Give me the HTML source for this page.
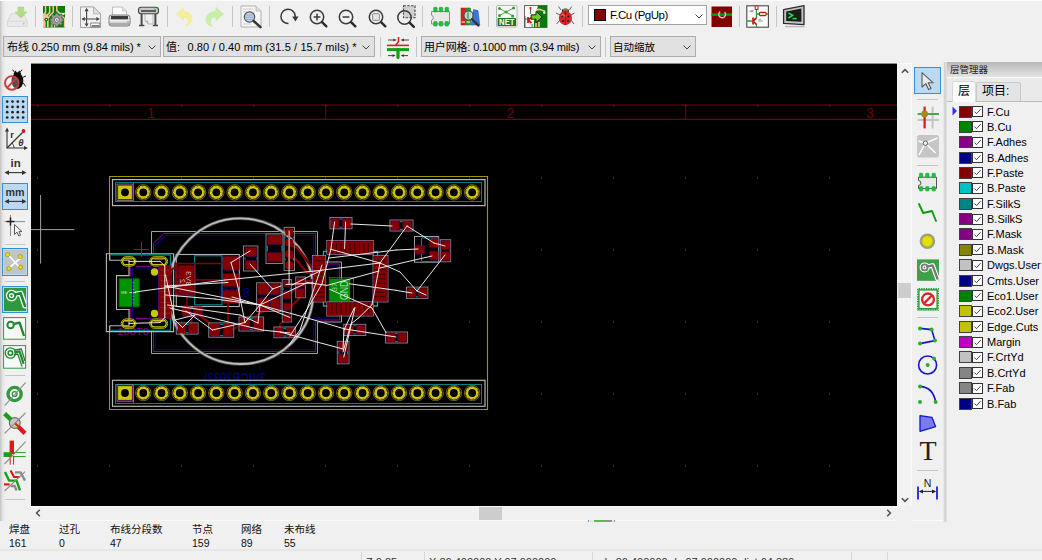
<!DOCTYPE html>
<html lang="zh"><head><meta charset="utf-8"><title>Pcbnew</title>
<style>
*{box-sizing:border-box;margin:0;padding:0}
html,body{width:1042px;height:560px;overflow:hidden;background:#f0f0f0;font-family:"Liberation Sans","Noto Sans CJK SC",sans-serif;font-size:12px;color:#000}
.abs{position:absolute}
#canvas{position:absolute;left:31px;top:64px;width:866px;height:442px;background:#000;overflow:hidden}
.combo{position:absolute;height:21px;border:1px solid #adadad;background:#e1e1e1;font-size:11px;line-height:20px;padding-left:3px;white-space:nowrap;overflow:hidden}
.combo .chev{position:absolute;right:4px;top:8px}
.sep{position:absolute;width:1px;background:#c5c5c5}
.hsep{position:absolute;height:1px;background:#c5c5c5}
.lr{position:absolute;left:953px;height:13px;width:90px;white-space:nowrap}
.lr .sw{position:absolute;left:6px;top:0;width:13px;height:12px;border:1px solid #404040}
.lr .cb{position:absolute;left:19px;top:0.5px;width:11px;height:11px;border:1px solid #333;background:#fff}
.lr .cb svg{position:absolute;left:0;top:0;width:9px;height:9px}
.lr .ln{position:absolute;left:34px;top:-1px;font-size:11px;line-height:14px;color:#000}
.ico{position:absolute}
.msg{position:absolute;font-size:10.5px;line-height:13px;color:#111;white-space:nowrap}
</style></head>
<body>
<div class="abs" style="left:0;top:0;width:8px;height:521px;background:linear-gradient(90deg,#c2c2c2 0,#e4e4e4 2.5px,#f0f0f0 6px)"></div>
<div class="abs" style="left:0;top:0;width:1042px;height:1px;background:#fcfcfc"></div>
<div class="sep" style="left:35px;top:6px;height:21px"></div>
<div class="sep" style="left:72px;top:6px;height:21px"></div>
<div class="sep" style="left:167px;top:6px;height:21px"></div>
<div class="sep" style="left:232px;top:6px;height:21px"></div>
<div class="sep" style="left:269px;top:6px;height:21px"></div>
<div class="sep" style="left:422px;top:6px;height:21px"></div>
<div class="sep" style="left:488px;top:6px;height:21px"></div>
<div class="sep" style="left:582px;top:6px;height:21px"></div>
<div class="sep" style="left:739px;top:6px;height:21px"></div>
<div class="sep" style="left:776px;top:6px;height:21px"></div>
<svg class="ico" style="left:6px;top:4px" width="24" height="24" viewBox="0 0 24 24"><path d="M5.25 9.75 H17.75 L21.25 17.25 V22.5 H1.5 V17.25 Z" fill="#e9e9e9" stroke="#d2d2d2" stroke-width="0.8"/><path d="M1.5 17.25 H21.25" stroke="#d6d6d6" stroke-width="0.8"/><path d="M12 3 H17.75 V8 H21 L15 14.2 L9 8 H12 Z" fill="#b4dc88" stroke="#a8d47c" stroke-width="0.6"/><circle cx="17.75" cy="19.7" r="0.9" fill="#7ee060"/></svg>
<svg class="ico" style="left:43px;top:6px" width="22" height="22" viewBox="0 0 22 22"><rect x="0" y="0" width="22" height="21.5" fill="#0a7a0a"/><path d="M0 9.6 L2.4 7.2 L7.2 12 V21.5 H0 Z" fill="#f0c890"/><path d="M2.55 0 V6.4 L0 9 M6.7 0 V6.6 L2.8 10.4 M10.2 0 V6.2 L6 10.4 M13.8 0 V4.6 L16.6 7.4 H22" stroke="#f0c890" stroke-width="1.5" fill="none"/><path d="M3.3 13 V21.5 M6.4 12 V21.5" stroke="#0a7a0a" stroke-width="1.4" fill="none"/><path d="M8.8 14 V21.5 M11.6 18 V21.5 M18.5 9.5 L21.5 12.5 V21.5" stroke="#f0c890" stroke-width="1.3" fill="none"/><circle cx="3.3" cy="13.6" r="1.9" fill="#0a7a0a"/><circle cx="3.3" cy="13.6" r="0.7" fill="#fff"/><circle cx="20.2" cy="8" r="1.1" fill="#fff"/><g transform="translate(13.8,13.9)"><path d="M-1.1 -6.3 H1.1 L1.5 -4.6 L3 -4 L4.5 -5 L6 -3.4 L5 -2 L5.6 -0.6 L7.2 -0.2 V1.9 L5.6 2.3 L5 3.7 L6 5.1 L4.5 6.7 L3 5.7 L1.5 6.3 L1.1 8 H-1.1 L-1.5 6.3 L-3 5.7 L-4.5 6.7 L-6 5.1 L-5 3.7 L-5.6 2.3 L-7.2 1.9 V-0.2 L-5.6 -0.6 L-5 -2 L-6 -3.4 L-4.5 -5 L-3 -4 L-1.5 -4.6 Z" transform="translate(0,-0.8) scale(0.92)" fill="#9a9a9a" stroke="#5a5a5a" stroke-width="0.8"/><circle cx="0" cy="0" r="2.5" fill="#d8e8d8" stroke="#5a5a5a" stroke-width="0.8"/><circle cx="0" cy="0" r="1" fill="#58a858"/></g></svg>
<svg class="ico" style="left:80px;top:5px" width="22" height="24" viewBox="0 0 22 24"><path d="M0.5 1.9 H13.5 L20.5 8.9 V22.5 H0.5 Z" fill="#f2f2f2" stroke="#9c9c9c" stroke-width="0.9"/><path d="M13.5 1.9 V8.9 H20.5 Z" fill="#dedede" stroke="#a8a8a8" stroke-width="0.7"/><path d="M6.6 4.2 V20.4 M2.6 14 H18.6" stroke="#444" stroke-width="1.1"/><path d="M6.6 2.8 L4.6 6.2 H8.6 Z M6.6 21.8 L4.6 18.4 H8.6 Z M1.4 14 L4.8 12 V16 Z M19.8 14 L16.4 12 V16 Z" fill="#444"/><rect x="10.8" y="18" width="9" height="3.8" fill="#fff" stroke="#7a6a6a" stroke-width="0.8"/><path d="M12 20.8 H19" stroke="#333" stroke-width="0.9"/></svg>
<svg class="ico" style="left:108px;top:5px" width="23" height="23" viewBox="0 0 23 23"><path d="M4.5 2 H14.5 L18.5 6 V12 H4.5 Z" fill="#fbfbfb" stroke="#b0b0b0" stroke-width="0.8"/><path d="M14.5 2 V6 H18.5" fill="#e2e2e2" stroke="#b4b4b4" stroke-width="0.6"/><rect x="1" y="10" width="21" height="11" rx="2.5" fill="#d8d8d8" stroke="#707070" stroke-width="0.9"/><rect x="3" y="11" width="17" height="3.4" fill="#3c3c3c"/><path d="M1.5 15.5 H21.5" stroke="#f4f4f4" stroke-width="1.4"/><path d="M2 19 H21" stroke="#a0a0a0" stroke-width="1.6"/><circle cx="20" cy="16.8" r="0.8" fill="#40d040"/></svg>
<svg class="ico" style="left:137px;top:6px" width="23" height="21" viewBox="0 0 23 21"><path d="M8 5 H16 V18 H11 L8 15 Z" fill="#f0f0f0" stroke="#a0a0a0" stroke-width="0.7"/><path d="M8 15 H11 V18" fill="#ccc" stroke="#a0a0a0" stroke-width="0.6"/><rect x="1.5" y="1.2" width="20" height="6.6" rx="2.6" fill="#c8c8c8" stroke="#4a4a4a" stroke-width="1.1"/><path d="M4 5 H19" stroke="#222" stroke-width="1.3"/><circle cx="18.3" cy="3.2" r="0.9" fill="#30e030"/><path d="M4.6 8 V19 M18.4 8 V19" stroke="#4a4a4a" stroke-width="2"/><path d="M2 19.6 H7.4 M15.8 19.6 H21" stroke="#4a4a4a" stroke-width="1.5"/></svg>
<svg class="ico" style="left:175px;top:6px" width="19" height="21" viewBox="0 0 19 21"><path d="M1.5 8 L8.5 1.5 V5.5 C14 5.5 17 9 17 12.5 C17 16 14 19 11 19.5 C13 17.5 13.3 15.5 12.6 13.6 C11.8 11.6 10.5 10.8 8.5 10.8 V14.5 Z" fill="#f6ee9c" stroke="#f2e98e" stroke-width="0.6"/></svg>
<svg class="ico" style="left:204px;top:6px" width="21" height="22" viewBox="0 0 21 22"><path d="M19.5 8 L12 1.5 V5.5 C6 5.5 2 9.5 2 13.5 C2 17 4.5 19.5 8 20 C6.3 18 6 16 6.8 14 C7.7 11.8 9.5 11 12 11 V14.5 Z" fill="#c8efa6" stroke="#bfe89a" stroke-width="0.6"/></svg>
<svg class="ico" style="left:239px;top:4px" width="24" height="25" viewBox="0 0 24 25"><path d="M2 2 H17 L22 7 V23 H2 Z" fill="#f6f6f6" stroke="#a8a8a8" stroke-width="0.9"/><path d="M17 2 V7 H22" fill="#e0e0e0" stroke="#b0b0b0" stroke-width="0.7"/><path d="M4 5 H14 M4 8 H16 M4 20 H12" stroke="#c8c8c8" stroke-width="0.9"/><circle cx="10.5" cy="13" r="5.2" fill="#c6d4ee" stroke="#555" stroke-width="1.2"/><path d="M6.6 11 H14.4 M6 13.2 H15 M6.6 15.4 H14.4" stroke="#8ea2cc" stroke-width="0.9"/><path d="M14.6 17 L21.5 23.2" stroke="#333" stroke-width="2.4" stroke-linecap="round"/></svg>
<svg class="ico" style="left:279px;top:7px" width="20" height="19" viewBox="0 0 20 19"><path d="M16.3 10 A7.2 7.2 0 1 0 9.5 16.6" fill="none" stroke="#3a3a3a" stroke-width="1.5"/><path d="M13.2 9.6 H19.6 L16.4 14.6 Z" fill="#3a3a3a"/></svg>
<svg class="ico" style="left:306px;top:6px" width="24" height="24" viewBox="0 0 24 24"><circle cx="11" cy="11" r="6.7" fill="none" stroke="#3a3a3a" stroke-width="1.5"/><path d="M16.04 16.04 L20.34 20.34" stroke="#2a2a2a" stroke-width="2.4" stroke-linecap="round"/><path d="M7.6 11 H14.4 M11 7.6 V14.4" stroke="#3a3a3a" stroke-width="1.5"/></svg>
<svg class="ico" style="left:335px;top:6px" width="24" height="24" viewBox="0 0 24 24"><circle cx="11" cy="11" r="6.7" fill="none" stroke="#3a3a3a" stroke-width="1.5"/><path d="M16.04 16.04 L20.34 20.34" stroke="#2a2a2a" stroke-width="2.4" stroke-linecap="round"/><path d="M7.6 11 H14.4" stroke="#3a3a3a" stroke-width="1.5"/></svg>
<svg class="ico" style="left:365px;top:6px" width="24" height="24" viewBox="0 0 24 24"><circle cx="11" cy="11" r="6.7" fill="none" stroke="#3a3a3a" stroke-width="1.5"/><path d="M16.04 16.04 L20.34 20.34" stroke="#2a2a2a" stroke-width="2.4" stroke-linecap="round"/><rect x="7.6" y="7.6" width="6.8" height="6.8" rx="1" fill="#e4e4e4" stroke="#8a8a8a" stroke-width="1"/></svg>
<svg class="ico" style="left:395px;top:4px" width="24" height="26" viewBox="0 0 24 26"><rect x="8.5" y="1.8" width="11.5" height="12" fill="#d0d0d0" stroke="#444" stroke-width="1.1" stroke-dasharray="2.4 1.4"/><circle cx="9.5" cy="13.5" r="6.7" fill="none" stroke="#3a3a3a" stroke-width="1.5"/><path d="M14.54 18.54 L18.84 22.84" stroke="#2a2a2a" stroke-width="2.4" stroke-linecap="round"/></svg>
<svg class="ico" style="left:429px;top:6px" width="24" height="22" viewBox="0 0 24 22"><path d="M2.5 5.5 H20.5 V18 H2.5 V14.2 A2.6 2.6 0 0 0 2.5 9.2 Z" fill="#e8e8e8" stroke="#8c8c8c" stroke-width="1"/><rect x="4.6" y="1.3" width="3.6" height="4.6" rx="0.8" fill="#20c040" stroke="#0a9a28" stroke-width="0.5"/><rect x="4.6" y="15.5" width="3.6" height="4.6" rx="0.8" fill="#20c040" stroke="#0a9a28" stroke-width="0.5"/><rect x="10.2" y="1.3" width="3.6" height="4.6" rx="0.8" fill="#20c040" stroke="#0a9a28" stroke-width="0.5"/><rect x="10.2" y="15.5" width="3.6" height="4.6" rx="0.8" fill="#20c040" stroke="#0a9a28" stroke-width="0.5"/><rect x="16" y="1.3" width="3.6" height="4.6" rx="0.8" fill="#20c040" stroke="#0a9a28" stroke-width="0.5"/><rect x="16" y="15.5" width="3.6" height="4.6" rx="0.8" fill="#20c040" stroke="#0a9a28" stroke-width="0.5"/></svg>
<svg class="ico" style="left:459px;top:6px" width="24" height="22" viewBox="0 0 24 22"><rect x="2" y="2" width="4.6" height="17" fill="#e02020" stroke="#a01010" stroke-width="0.5"/><rect x="7" y="2" width="4.6" height="17" fill="#20a030" stroke="#107018" stroke-width="0.5"/><path d="M12 19 L14.5 3.5 L19 4.5 L20.8 19 Z" fill="#3878d8" stroke="#2050a0" stroke-width="0.5"/><path d="M2.5 16 H6 M7.5 16 H11" stroke="#fff" stroke-width="1"/><circle cx="9.5" cy="9.5" r="4.6" fill="#d4e4e0" fill-opacity="0.85" stroke="#4a4a4a" stroke-width="1.2"/><path d="M9 6.5 V12.5" stroke="#40b050" stroke-width="1.6"/><path d="M13 13.2 L19.5 19.6" stroke="#333" stroke-width="2.2" stroke-linecap="round"/></svg>
<svg class="ico" style="left:496px;top:5px" width="22" height="23" viewBox="0 0 22 23"><rect x="0.5" y="0.5" width="20.5" height="21.5" rx="1.2" fill="#f6f6f6" stroke="#b4b4b4" stroke-width="1"/><path d="M3.5 3.5 L17 11 M17.5 3 L3.5 10.5" stroke="#3c9a3c" stroke-width="0.9" fill="none"/><circle cx="3.5" cy="3.5" r="1.5" fill="#3c9a3c"/><circle cx="17.6" cy="3" r="1.5" fill="#3c9a3c"/><circle cx="3.5" cy="10.5" r="1.5" fill="#3c9a3c"/><circle cx="16.6" cy="11" r="1.5" fill="#3c9a3c"/><circle cx="10.2" cy="7" r="1.5" fill="#3c9a3c"/><rect x="1.6" y="13" width="18.4" height="8" fill="#1e7a1e"/><text x="10.8" y="20.2" font-size="8.2" font-weight="bold" fill="#fff" text-anchor="middle" font-family="Liberation Sans, sans-serif" textLength="15.5" lengthAdjust="spacingAndGlyphs">NET</text></svg>
<svg class="ico" style="left:524px;top:5px" width="24" height="24" viewBox="0 0 24 24"><rect x="0.5" y="0.5" width="22.5" height="22" fill="#fafafa" stroke="#6a6a6a" stroke-width="1"/><path d="M14 0.5 H23 V22.5 H10 V16 Z" fill="#0a7a0a"/><path d="M13 5 C16 3 18 6 21 6 M12 22 V18 M15 22 V17" stroke="#e8c890" stroke-width="1.6" fill="none"/><circle cx="20.3" cy="7.5" r="1.2" fill="#fff"/><path d="M6.5 2 V8 M1 14 H5 M1 22 V11" stroke="#444" stroke-width="0.8"/><path d="M6.5 2 V4.5" stroke="#d02020" stroke-width="1.8"/><path d="M6.5 6 V9" stroke="#30a030" stroke-width="1.2"/><path d="M4 12 V18 M4 15 L7.5 12.5 M4 15 L7.5 18" stroke="#c01818" stroke-width="1.7" fill="none"/><path d="M8 22 V19" stroke="#30a030" stroke-width="1.2"/><path d="M7.2 9.8 H12 V6.4 L18.2 12 L12 17.6 V14.2 H7.2 Z" fill="#6ad020" stroke="#222" stroke-width="1"/></svg>
<svg class="ico" style="left:555px;top:5px" width="22" height="23" viewBox="0 0 22 23"><path d="M6 5 L3.5 1.5 M14.5 5 L16.5 1.5 M5 10 L1 8 M16 10 L19.5 8 M5 15 L1.5 19 M16 15 L19 19" stroke="#555" stroke-width="0.9" fill="none"/><ellipse cx="10.4" cy="6" rx="3.6" ry="2.6" fill="#222"/><path d="M8 5 H13" stroke="#e8c030" stroke-width="1"/><ellipse cx="10.4" cy="13" rx="6.6" ry="7.2" fill="#d82828"/><ellipse cx="8.6" cy="10.5" rx="2.6" ry="2" fill="#f07070" opacity="0.7"/><path d="M10.4 6 V20" stroke="#801010" stroke-width="0.7"/><circle cx="7.4" cy="11.5" r="1.1" fill="#222"/><circle cx="13.4" cy="11.5" r="1.1" fill="#222"/><circle cx="8" cy="16" r="1.1" fill="#222"/><circle cx="13" cy="16" r="1.1" fill="#222"/><circle cx="10.4" cy="8.6" r="1" fill="#222"/></svg>
<svg class="ico" style="left:711px;top:6px" width="21" height="21" viewBox="0 0 21 21"><rect x="0.5" y="0.5" width="20.5" height="20.5" fill="#840000"/><path d="M0.5 8.6 H21" stroke="#0a9a0a" stroke-width="2.6"/><path d="M13.6 6 A3.4 3.4 0 1 1 9.2 5.6" fill="none" stroke="#c8c8c8" stroke-width="1.4"/></svg>
<svg class="ico" style="left:746px;top:5px" width="24" height="23" viewBox="0 0 24 23"><rect x="0.8" y="0.8" width="21.6" height="21.4" fill="#fafafa" stroke="#4a4a4a" stroke-width="1.1"/><path d="M10.5 1 V4 M10.5 4 V13 M10.5 9 H13 M20 9 H22 M1 16 H6 M10.5 19 V22" stroke="#30a030" stroke-width="1.3" fill="none"/><rect x="9.2" y="0.8" width="2.8" height="3.6" fill="#fff" stroke="#c01818" stroke-width="1"/><rect x="13.4" y="7.4" width="6.8" height="3.2" rx="1" fill="#f8e8b0" stroke="#c01818" stroke-width="1.1"/><path d="M7 12.5 V19.5 M7 16 L10.5 13 M7 16 L10.5 19.5" stroke="#c01818" stroke-width="1.7" fill="none"/><path d="M3.5 6.6 H7.5 M4.5 5.4 H7.5 M12.5 14.6 H15 M12 16 H17" stroke="#777" stroke-width="0.7"/></svg>
<svg class="ico" style="left:782px;top:4px" width="25" height="25" viewBox="0 0 25 25"><path d="M3 22.6 H22.5" stroke="#b8b8b8" stroke-width="1.4"/><path d="M1.6 5.6 L22 1.6 V20.6 L1.6 19.4 Z" fill="#c4c4c4" stroke="#2c2c2c" stroke-width="1.3" stroke-linejoin="round"/><path d="M4.2 7.4 L19.4 4.6 V17.8 L4.2 17 Z" fill="#1c1c1c"/><path d="M6.4 9 L10.6 11.4 L6.4 14" fill="none" stroke="#20e040" stroke-width="1.6"/><path d="M10.6 14.6 H14.6" stroke="#20e040" stroke-width="1.5"/></svg>
<svg class="ico" style="left:386px;top:36px" width="24" height="24" viewBox="0 0 24 24"><path d="M1 9.4 H23" stroke="#e02020" stroke-width="1.6"/><path d="M12.5 1 V5.6 L9.6 9.4" stroke="#e02020" stroke-width="1.6" fill="none"/><path d="M1 13.6 H23" stroke="#12a012" stroke-width="3"/><path d="M12 13.6 V21.5" stroke="#12a012" stroke-width="3.2" stroke-linecap="round"/><path d="M2 4 H8 M17 4 H23 M2 19.6 H8 M16 19.6 H22" stroke="#333" stroke-width="0.9"/><path d="M10.6 4 L7.4 2.6 V5.4 Z M14.6 4 L17.8 2.6 V5.4 Z M9.6 19.6 L6.6 18.2 V21 Z M14.8 19.6 L17.8 18.2 V21 Z" fill="#333"/></svg>
<div class="combo" style="left:588px;top:5px;width:119px;height:20px;background:#fff;border-color:#a2a2a2;line-height:19px;padding-left:21px;font-size:11.5px;letter-spacing:-0.5px"><span class="abs" style="left:5px;top:3px;width:12px;height:12px;background:#840000;border:1px solid #000"></span>F.Cu (PgUp)<svg class="chev" style="right:3px" width="8" height="5" viewBox="0 0 8 5"><path d="M0.5 0.5 L4 4 L7.5 0.5" fill="none" stroke="#444" stroke-width="1"/></svg></div>
<div class="combo" style="left:3px;top:36px;width:158px;letter-spacing:-0.08px">布线 0.250 mm (9.84 mils) *<svg class="chev" width="8" height="5" viewBox="0 0 8 5"><path d="M0.5 0.5 L4 4 L7.5 0.5" fill="none" stroke="#444" stroke-width="1"/></svg></div>
<div class="combo" style="left:163px;top:36px;width:212px;padding-left:2px;letter-spacing:0.1px">值:<span style="margin-left:4px"></span> 0.80 / 0.40 mm (31.5 / 15.7 mils) *<svg class="chev" width="8" height="5" viewBox="0 0 8 5"><path d="M0.5 0.5 L4 4 L7.5 0.5" fill="none" stroke="#444" stroke-width="1"/></svg></div>
<div class="sep" style="left:380px;top:37px;height:20px"></div>
<div class="sep" style="left:416px;top:37px;height:20px"></div>
<div class="combo" style="left:421px;top:36px;width:180px;padding-left:2px;letter-spacing:-0.16px">用户网格: 0.1000 mm (3.94 mils)<svg class="chev" width="8" height="5" viewBox="0 0 8 5"><path d="M0.5 0.5 L4 4 L7.5 0.5" fill="none" stroke="#444" stroke-width="1"/></svg></div>
<div class="sep" style="left:605px;top:37px;height:20px"></div>
<div class="combo" style="left:610px;top:36px;width:86px;padding-left:2px;font-size:10.5px">自动缩放<svg class="chev" width="8" height="5" viewBox="0 0 8 5"><path d="M0.5 0.5 L4 4 L7.5 0.5" fill="none" stroke="#444" stroke-width="1"/></svg></div>
<div id="canvas"><svg width="866" height="443" viewBox="31 64 866 443" style="position:absolute;left:0;top:0" font-family="Liberation Sans, sans-serif">
<g stroke="#7c0000" stroke-width="1.1" fill="none">
<path d="M31 105 H897 M31 119.4 H897 M325.8 105 V119.4 M685.8 105 V119.4"/>
</g>
<text x="150.9" y="117.9" font-size="15" fill="#6c0000" text-anchor="middle">1</text>
<text x="510.3" y="117.9" font-size="15" fill="#6c0000" text-anchor="middle">2</text>
<text x="870" y="117.9" font-size="15" fill="#6c0000" text-anchor="middle">3</text>
<g fill="#505050">
<rect x="37" y="105.3" width="1" height="1"/>
<rect x="37" y="177.3" width="1" height="1"/>
<rect x="37" y="249.3" width="1" height="1"/>
<rect x="37" y="321.3" width="1" height="1"/>
<rect x="37" y="393.3" width="1" height="1"/>
<rect x="37" y="465.3" width="1" height="1"/>
<rect x="109" y="105.3" width="1" height="1"/>
<rect x="109" y="177.3" width="1" height="1"/>
<rect x="109" y="249.3" width="1" height="1"/>
<rect x="109" y="321.3" width="1" height="1"/>
<rect x="109" y="393.3" width="1" height="1"/>
<rect x="109" y="465.3" width="1" height="1"/>
<rect x="181" y="105.3" width="1" height="1"/>
<rect x="181" y="177.3" width="1" height="1"/>
<rect x="181" y="249.3" width="1" height="1"/>
<rect x="181" y="321.3" width="1" height="1"/>
<rect x="181" y="393.3" width="1" height="1"/>
<rect x="181" y="465.3" width="1" height="1"/>
<rect x="253" y="105.3" width="1" height="1"/>
<rect x="253" y="177.3" width="1" height="1"/>
<rect x="253" y="249.3" width="1" height="1"/>
<rect x="253" y="321.3" width="1" height="1"/>
<rect x="253" y="393.3" width="1" height="1"/>
<rect x="253" y="465.3" width="1" height="1"/>
<rect x="325" y="105.3" width="1" height="1"/>
<rect x="325" y="177.3" width="1" height="1"/>
<rect x="325" y="249.3" width="1" height="1"/>
<rect x="325" y="321.3" width="1" height="1"/>
<rect x="325" y="393.3" width="1" height="1"/>
<rect x="325" y="465.3" width="1" height="1"/>
<rect x="397" y="105.3" width="1" height="1"/>
<rect x="397" y="177.3" width="1" height="1"/>
<rect x="397" y="249.3" width="1" height="1"/>
<rect x="397" y="321.3" width="1" height="1"/>
<rect x="397" y="393.3" width="1" height="1"/>
<rect x="397" y="465.3" width="1" height="1"/>
<rect x="469" y="105.3" width="1" height="1"/>
<rect x="469" y="177.3" width="1" height="1"/>
<rect x="469" y="249.3" width="1" height="1"/>
<rect x="469" y="321.3" width="1" height="1"/>
<rect x="469" y="393.3" width="1" height="1"/>
<rect x="469" y="465.3" width="1" height="1"/>
<rect x="541" y="105.3" width="1" height="1"/>
<rect x="541" y="177.3" width="1" height="1"/>
<rect x="541" y="249.3" width="1" height="1"/>
<rect x="541" y="321.3" width="1" height="1"/>
<rect x="541" y="393.3" width="1" height="1"/>
<rect x="541" y="465.3" width="1" height="1"/>
<rect x="613" y="105.3" width="1" height="1"/>
<rect x="613" y="177.3" width="1" height="1"/>
<rect x="613" y="249.3" width="1" height="1"/>
<rect x="613" y="321.3" width="1" height="1"/>
<rect x="613" y="393.3" width="1" height="1"/>
<rect x="613" y="465.3" width="1" height="1"/>
<rect x="685" y="105.3" width="1" height="1"/>
<rect x="685" y="177.3" width="1" height="1"/>
<rect x="685" y="249.3" width="1" height="1"/>
<rect x="685" y="321.3" width="1" height="1"/>
<rect x="685" y="393.3" width="1" height="1"/>
<rect x="685" y="465.3" width="1" height="1"/>
<rect x="757" y="105.3" width="1" height="1"/>
<rect x="757" y="177.3" width="1" height="1"/>
<rect x="757" y="249.3" width="1" height="1"/>
<rect x="757" y="321.3" width="1" height="1"/>
<rect x="757" y="393.3" width="1" height="1"/>
<rect x="757" y="465.3" width="1" height="1"/>
<rect x="829" y="105.3" width="1" height="1"/>
<rect x="829" y="177.3" width="1" height="1"/>
<rect x="829" y="249.3" width="1" height="1"/>
<rect x="829" y="321.3" width="1" height="1"/>
<rect x="829" y="393.3" width="1" height="1"/>
<rect x="829" y="465.3" width="1" height="1"/>
</g>
<path d="M40.6 195 V263.6 M31 229.6 H74.4" stroke="#a0a0a0" stroke-width="1" fill="none"/>
<g fill="none" stroke-width="1">
<path d="M151.5 231.5 H317.5 V262 H341.5 V322 H317.5 V353.5 H151.5 V331 M151.5 254 V231.5" stroke="#a0a0a0"/>
<path d="M153.5 254 V243 L164 233.5 H315.5 V264 H339.5 V320 H315.5 V351.5 H153.5 V331" stroke="#8c008c"/>
<path d="M155.5 254 V245 L166 235.5 H313.5 V266 H337.5 V318 H313.5 V349.5 H155.5 V331" stroke="#00008c" stroke-width="1.2"/>
</g>
<path d="M132.6 269 H158 M132.6 319 H158" fill="none" stroke="#00008c" stroke-width="1.2"/>
<path d="M130.3 266 V276.5 M130.3 308.6 V320 M136 266.4 H151 M136 318.6 H151" fill="none" stroke="#8c008c" stroke-width="1"/>
<circle cx="240.5" cy="291.2" r="72.8" fill="none" stroke="#4c4c4c" stroke-width="3.4"/>
<circle cx="240.5" cy="291.2" r="72.8" fill="none" stroke="#bcbcbc" stroke-width="1.8"/>
<g transform="translate(266,382) scale(-1,1)"><text x="0" y="0" font-size="12" fill="#000090" textLength="62" lengthAdjust="spacingAndGlyphs">3V(CR2032)</text></g>
<g transform="translate(149,334.8) scale(-1,1)"><text x="0" y="0" font-size="10.5" fill="#8c008c" textLength="32" lengthAdjust="spacingAndGlyphs" font-family="Liberation Mono, monospace">OTG01</text></g>
<text x="218.7" y="296.8" font-size="12.4" fill="#00007c" textLength="31.7" lengthAdjust="spacingAndGlyphs">C118</text>
<path d="M109.5 260 V176.5 H487.5 V409.5 H109.5 V326" fill="none" stroke="#9a9a00" stroke-width="1.1"/>
<rect x="112.5" y="179.6" width="372.5" height="26" fill="none" stroke="#b4b4b4" stroke-width="1.2"/>
<rect x="115.5" y="182.5" width="366" height="19" fill="none" stroke="#008080" stroke-width="1"/>
<path d="M133.5 182.5 V201.5" stroke="#008080" stroke-width="1" fill="none"/>
<rect x="117" y="184.1" width="16" height="16.4" fill="none" stroke="#8a8a8a" stroke-width="0.8"/>
<rect x="118.10" y="185.40" width="13.8" height="13.8" fill="#c8c800"/>
<rect x="117.70" y="185.00" width="14.6" height="14.6" fill="none" stroke="#a000a0" stroke-width="0.6" opacity="0.8"/>
<circle cx="125.00" cy="192.3" r="3.9" fill="#000"/>
<circle cx="143.27" cy="192.3" r="7.7" fill="none" stroke="#808000" stroke-width="0.8"/>
<circle cx="143.27" cy="192.3" r="6.7" fill="#cccc00"/>
<circle cx="143.27" cy="192.3" r="6.1" fill="none" stroke="#b000a0" stroke-width="0.7" stroke-dasharray="1.6 2.2" opacity="0.9"/>
<circle cx="143.27" cy="192.3" r="3.9" fill="#000"/>
<circle cx="161.54" cy="192.3" r="7.7" fill="none" stroke="#808000" stroke-width="0.8"/>
<circle cx="161.54" cy="192.3" r="6.7" fill="#cccc00"/>
<circle cx="161.54" cy="192.3" r="6.1" fill="none" stroke="#b000a0" stroke-width="0.7" stroke-dasharray="1.6 2.2" opacity="0.9"/>
<circle cx="161.54" cy="192.3" r="3.9" fill="#000"/>
<circle cx="179.81" cy="192.3" r="7.7" fill="none" stroke="#808000" stroke-width="0.8"/>
<circle cx="179.81" cy="192.3" r="6.7" fill="#cccc00"/>
<circle cx="179.81" cy="192.3" r="6.1" fill="none" stroke="#b000a0" stroke-width="0.7" stroke-dasharray="1.6 2.2" opacity="0.9"/>
<circle cx="179.81" cy="192.3" r="3.9" fill="#000"/>
<circle cx="198.08" cy="192.3" r="7.7" fill="none" stroke="#808000" stroke-width="0.8"/>
<circle cx="198.08" cy="192.3" r="6.7" fill="#cccc00"/>
<circle cx="198.08" cy="192.3" r="6.1" fill="none" stroke="#b000a0" stroke-width="0.7" stroke-dasharray="1.6 2.2" opacity="0.9"/>
<circle cx="198.08" cy="192.3" r="3.9" fill="#000"/>
<circle cx="216.35" cy="192.3" r="7.7" fill="none" stroke="#808000" stroke-width="0.8"/>
<circle cx="216.35" cy="192.3" r="6.7" fill="#cccc00"/>
<circle cx="216.35" cy="192.3" r="6.1" fill="none" stroke="#b000a0" stroke-width="0.7" stroke-dasharray="1.6 2.2" opacity="0.9"/>
<circle cx="216.35" cy="192.3" r="3.9" fill="#000"/>
<circle cx="234.62" cy="192.3" r="7.7" fill="none" stroke="#808000" stroke-width="0.8"/>
<circle cx="234.62" cy="192.3" r="6.7" fill="#cccc00"/>
<circle cx="234.62" cy="192.3" r="6.1" fill="none" stroke="#b000a0" stroke-width="0.7" stroke-dasharray="1.6 2.2" opacity="0.9"/>
<circle cx="234.62" cy="192.3" r="3.9" fill="#000"/>
<circle cx="252.89" cy="192.3" r="7.7" fill="none" stroke="#808000" stroke-width="0.8"/>
<circle cx="252.89" cy="192.3" r="6.7" fill="#cccc00"/>
<circle cx="252.89" cy="192.3" r="6.1" fill="none" stroke="#b000a0" stroke-width="0.7" stroke-dasharray="1.6 2.2" opacity="0.9"/>
<circle cx="252.89" cy="192.3" r="3.9" fill="#000"/>
<circle cx="271.16" cy="192.3" r="7.7" fill="none" stroke="#808000" stroke-width="0.8"/>
<circle cx="271.16" cy="192.3" r="6.7" fill="#cccc00"/>
<circle cx="271.16" cy="192.3" r="6.1" fill="none" stroke="#b000a0" stroke-width="0.7" stroke-dasharray="1.6 2.2" opacity="0.9"/>
<circle cx="271.16" cy="192.3" r="3.9" fill="#000"/>
<circle cx="289.43" cy="192.3" r="7.7" fill="none" stroke="#808000" stroke-width="0.8"/>
<circle cx="289.43" cy="192.3" r="6.7" fill="#cccc00"/>
<circle cx="289.43" cy="192.3" r="6.1" fill="none" stroke="#b000a0" stroke-width="0.7" stroke-dasharray="1.6 2.2" opacity="0.9"/>
<circle cx="289.43" cy="192.3" r="3.9" fill="#000"/>
<circle cx="307.70" cy="192.3" r="7.7" fill="none" stroke="#808000" stroke-width="0.8"/>
<circle cx="307.70" cy="192.3" r="6.7" fill="#cccc00"/>
<circle cx="307.70" cy="192.3" r="6.1" fill="none" stroke="#b000a0" stroke-width="0.7" stroke-dasharray="1.6 2.2" opacity="0.9"/>
<circle cx="307.70" cy="192.3" r="3.9" fill="#000"/>
<circle cx="325.97" cy="192.3" r="7.7" fill="none" stroke="#808000" stroke-width="0.8"/>
<circle cx="325.97" cy="192.3" r="6.7" fill="#cccc00"/>
<circle cx="325.97" cy="192.3" r="6.1" fill="none" stroke="#b000a0" stroke-width="0.7" stroke-dasharray="1.6 2.2" opacity="0.9"/>
<circle cx="325.97" cy="192.3" r="3.9" fill="#000"/>
<circle cx="344.24" cy="192.3" r="7.7" fill="none" stroke="#808000" stroke-width="0.8"/>
<circle cx="344.24" cy="192.3" r="6.7" fill="#cccc00"/>
<circle cx="344.24" cy="192.3" r="6.1" fill="none" stroke="#b000a0" stroke-width="0.7" stroke-dasharray="1.6 2.2" opacity="0.9"/>
<circle cx="344.24" cy="192.3" r="3.9" fill="#000"/>
<circle cx="362.51" cy="192.3" r="7.7" fill="none" stroke="#808000" stroke-width="0.8"/>
<circle cx="362.51" cy="192.3" r="6.7" fill="#cccc00"/>
<circle cx="362.51" cy="192.3" r="6.1" fill="none" stroke="#b000a0" stroke-width="0.7" stroke-dasharray="1.6 2.2" opacity="0.9"/>
<circle cx="362.51" cy="192.3" r="3.9" fill="#000"/>
<circle cx="380.78" cy="192.3" r="7.7" fill="none" stroke="#808000" stroke-width="0.8"/>
<circle cx="380.78" cy="192.3" r="6.7" fill="#cccc00"/>
<circle cx="380.78" cy="192.3" r="6.1" fill="none" stroke="#b000a0" stroke-width="0.7" stroke-dasharray="1.6 2.2" opacity="0.9"/>
<circle cx="380.78" cy="192.3" r="3.9" fill="#000"/>
<circle cx="399.05" cy="192.3" r="7.7" fill="none" stroke="#808000" stroke-width="0.8"/>
<circle cx="399.05" cy="192.3" r="6.7" fill="#cccc00"/>
<circle cx="399.05" cy="192.3" r="6.1" fill="none" stroke="#b000a0" stroke-width="0.7" stroke-dasharray="1.6 2.2" opacity="0.9"/>
<circle cx="399.05" cy="192.3" r="3.9" fill="#000"/>
<circle cx="417.32" cy="192.3" r="7.7" fill="none" stroke="#808000" stroke-width="0.8"/>
<circle cx="417.32" cy="192.3" r="6.7" fill="#cccc00"/>
<circle cx="417.32" cy="192.3" r="6.1" fill="none" stroke="#b000a0" stroke-width="0.7" stroke-dasharray="1.6 2.2" opacity="0.9"/>
<circle cx="417.32" cy="192.3" r="3.9" fill="#000"/>
<circle cx="435.59" cy="192.3" r="7.7" fill="none" stroke="#808000" stroke-width="0.8"/>
<circle cx="435.59" cy="192.3" r="6.7" fill="#cccc00"/>
<circle cx="435.59" cy="192.3" r="6.1" fill="none" stroke="#b000a0" stroke-width="0.7" stroke-dasharray="1.6 2.2" opacity="0.9"/>
<circle cx="435.59" cy="192.3" r="3.9" fill="#000"/>
<circle cx="453.86" cy="192.3" r="7.7" fill="none" stroke="#808000" stroke-width="0.8"/>
<circle cx="453.86" cy="192.3" r="6.7" fill="#cccc00"/>
<circle cx="453.86" cy="192.3" r="6.1" fill="none" stroke="#b000a0" stroke-width="0.7" stroke-dasharray="1.6 2.2" opacity="0.9"/>
<circle cx="453.86" cy="192.3" r="3.9" fill="#000"/>
<circle cx="472.13" cy="192.3" r="7.7" fill="none" stroke="#808000" stroke-width="0.8"/>
<circle cx="472.13" cy="192.3" r="6.7" fill="#cccc00"/>
<circle cx="472.13" cy="192.3" r="6.1" fill="none" stroke="#b000a0" stroke-width="0.7" stroke-dasharray="1.6 2.2" opacity="0.9"/>
<circle cx="472.13" cy="192.3" r="3.9" fill="#000"/>
<rect x="112.5" y="380.3" width="372.5" height="26" fill="none" stroke="#b4b4b4" stroke-width="1.2"/>
<rect x="115.5" y="384.5" width="366" height="19" fill="none" stroke="#008080" stroke-width="1"/>
<path d="M133.5 384.5 V403.5" stroke="#008080" stroke-width="1" fill="none"/>
<rect x="117" y="384.8" width="16" height="16.4" fill="none" stroke="#8a8a8a" stroke-width="0.8"/>
<rect x="118.10" y="386.10" width="13.8" height="13.8" fill="#c8c800"/>
<rect x="117.70" y="385.70" width="14.6" height="14.6" fill="none" stroke="#a000a0" stroke-width="0.6" opacity="0.8"/>
<circle cx="125.00" cy="393" r="3.9" fill="#000"/>
<circle cx="143.27" cy="393" r="7.7" fill="none" stroke="#808000" stroke-width="0.8"/>
<circle cx="143.27" cy="393" r="6.7" fill="#cccc00"/>
<circle cx="143.27" cy="393" r="6.1" fill="none" stroke="#b000a0" stroke-width="0.7" stroke-dasharray="1.6 2.2" opacity="0.9"/>
<circle cx="143.27" cy="393" r="3.9" fill="#000"/>
<circle cx="161.54" cy="393" r="7.7" fill="none" stroke="#808000" stroke-width="0.8"/>
<circle cx="161.54" cy="393" r="6.7" fill="#cccc00"/>
<circle cx="161.54" cy="393" r="6.1" fill="none" stroke="#b000a0" stroke-width="0.7" stroke-dasharray="1.6 2.2" opacity="0.9"/>
<circle cx="161.54" cy="393" r="3.9" fill="#000"/>
<circle cx="179.81" cy="393" r="7.7" fill="none" stroke="#808000" stroke-width="0.8"/>
<circle cx="179.81" cy="393" r="6.7" fill="#cccc00"/>
<circle cx="179.81" cy="393" r="6.1" fill="none" stroke="#b000a0" stroke-width="0.7" stroke-dasharray="1.6 2.2" opacity="0.9"/>
<circle cx="179.81" cy="393" r="3.9" fill="#000"/>
<circle cx="198.08" cy="393" r="7.7" fill="none" stroke="#808000" stroke-width="0.8"/>
<circle cx="198.08" cy="393" r="6.7" fill="#cccc00"/>
<circle cx="198.08" cy="393" r="6.1" fill="none" stroke="#b000a0" stroke-width="0.7" stroke-dasharray="1.6 2.2" opacity="0.9"/>
<circle cx="198.08" cy="393" r="3.9" fill="#000"/>
<circle cx="216.35" cy="393" r="7.7" fill="none" stroke="#808000" stroke-width="0.8"/>
<circle cx="216.35" cy="393" r="6.7" fill="#cccc00"/>
<circle cx="216.35" cy="393" r="6.1" fill="none" stroke="#b000a0" stroke-width="0.7" stroke-dasharray="1.6 2.2" opacity="0.9"/>
<circle cx="216.35" cy="393" r="3.9" fill="#000"/>
<circle cx="234.62" cy="393" r="7.7" fill="none" stroke="#808000" stroke-width="0.8"/>
<circle cx="234.62" cy="393" r="6.7" fill="#cccc00"/>
<circle cx="234.62" cy="393" r="6.1" fill="none" stroke="#b000a0" stroke-width="0.7" stroke-dasharray="1.6 2.2" opacity="0.9"/>
<circle cx="234.62" cy="393" r="3.9" fill="#000"/>
<circle cx="252.89" cy="393" r="7.7" fill="none" stroke="#808000" stroke-width="0.8"/>
<circle cx="252.89" cy="393" r="6.7" fill="#cccc00"/>
<circle cx="252.89" cy="393" r="6.1" fill="none" stroke="#b000a0" stroke-width="0.7" stroke-dasharray="1.6 2.2" opacity="0.9"/>
<circle cx="252.89" cy="393" r="3.9" fill="#000"/>
<circle cx="271.16" cy="393" r="7.7" fill="none" stroke="#808000" stroke-width="0.8"/>
<circle cx="271.16" cy="393" r="6.7" fill="#cccc00"/>
<circle cx="271.16" cy="393" r="6.1" fill="none" stroke="#b000a0" stroke-width="0.7" stroke-dasharray="1.6 2.2" opacity="0.9"/>
<circle cx="271.16" cy="393" r="3.9" fill="#000"/>
<circle cx="289.43" cy="393" r="7.7" fill="none" stroke="#808000" stroke-width="0.8"/>
<circle cx="289.43" cy="393" r="6.7" fill="#cccc00"/>
<circle cx="289.43" cy="393" r="6.1" fill="none" stroke="#b000a0" stroke-width="0.7" stroke-dasharray="1.6 2.2" opacity="0.9"/>
<circle cx="289.43" cy="393" r="3.9" fill="#000"/>
<circle cx="307.70" cy="393" r="7.7" fill="none" stroke="#808000" stroke-width="0.8"/>
<circle cx="307.70" cy="393" r="6.7" fill="#cccc00"/>
<circle cx="307.70" cy="393" r="6.1" fill="none" stroke="#b000a0" stroke-width="0.7" stroke-dasharray="1.6 2.2" opacity="0.9"/>
<circle cx="307.70" cy="393" r="3.9" fill="#000"/>
<circle cx="325.97" cy="393" r="7.7" fill="none" stroke="#808000" stroke-width="0.8"/>
<circle cx="325.97" cy="393" r="6.7" fill="#cccc00"/>
<circle cx="325.97" cy="393" r="6.1" fill="none" stroke="#b000a0" stroke-width="0.7" stroke-dasharray="1.6 2.2" opacity="0.9"/>
<circle cx="325.97" cy="393" r="3.9" fill="#000"/>
<circle cx="344.24" cy="393" r="7.7" fill="none" stroke="#808000" stroke-width="0.8"/>
<circle cx="344.24" cy="393" r="6.7" fill="#cccc00"/>
<circle cx="344.24" cy="393" r="6.1" fill="none" stroke="#b000a0" stroke-width="0.7" stroke-dasharray="1.6 2.2" opacity="0.9"/>
<circle cx="344.24" cy="393" r="3.9" fill="#000"/>
<circle cx="362.51" cy="393" r="7.7" fill="none" stroke="#808000" stroke-width="0.8"/>
<circle cx="362.51" cy="393" r="6.7" fill="#cccc00"/>
<circle cx="362.51" cy="393" r="6.1" fill="none" stroke="#b000a0" stroke-width="0.7" stroke-dasharray="1.6 2.2" opacity="0.9"/>
<circle cx="362.51" cy="393" r="3.9" fill="#000"/>
<circle cx="380.78" cy="393" r="7.7" fill="none" stroke="#808000" stroke-width="0.8"/>
<circle cx="380.78" cy="393" r="6.7" fill="#cccc00"/>
<circle cx="380.78" cy="393" r="6.1" fill="none" stroke="#b000a0" stroke-width="0.7" stroke-dasharray="1.6 2.2" opacity="0.9"/>
<circle cx="380.78" cy="393" r="3.9" fill="#000"/>
<circle cx="399.05" cy="393" r="7.7" fill="none" stroke="#808000" stroke-width="0.8"/>
<circle cx="399.05" cy="393" r="6.7" fill="#cccc00"/>
<circle cx="399.05" cy="393" r="6.1" fill="none" stroke="#b000a0" stroke-width="0.7" stroke-dasharray="1.6 2.2" opacity="0.9"/>
<circle cx="399.05" cy="393" r="3.9" fill="#000"/>
<circle cx="417.32" cy="393" r="7.7" fill="none" stroke="#808000" stroke-width="0.8"/>
<circle cx="417.32" cy="393" r="6.7" fill="#cccc00"/>
<circle cx="417.32" cy="393" r="6.1" fill="none" stroke="#b000a0" stroke-width="0.7" stroke-dasharray="1.6 2.2" opacity="0.9"/>
<circle cx="417.32" cy="393" r="3.9" fill="#000"/>
<circle cx="435.59" cy="393" r="7.7" fill="none" stroke="#808000" stroke-width="0.8"/>
<circle cx="435.59" cy="393" r="6.7" fill="#cccc00"/>
<circle cx="435.59" cy="393" r="6.1" fill="none" stroke="#b000a0" stroke-width="0.7" stroke-dasharray="1.6 2.2" opacity="0.9"/>
<circle cx="435.59" cy="393" r="3.9" fill="#000"/>
<circle cx="453.86" cy="393" r="7.7" fill="none" stroke="#808000" stroke-width="0.8"/>
<circle cx="453.86" cy="393" r="6.7" fill="#cccc00"/>
<circle cx="453.86" cy="393" r="6.1" fill="none" stroke="#b000a0" stroke-width="0.7" stroke-dasharray="1.6 2.2" opacity="0.9"/>
<circle cx="453.86" cy="393" r="3.9" fill="#000"/>
<circle cx="472.13" cy="393" r="7.7" fill="none" stroke="#808000" stroke-width="0.8"/>
<circle cx="472.13" cy="393" r="6.7" fill="#cccc00"/>
<circle cx="472.13" cy="393" r="6.1" fill="none" stroke="#b000a0" stroke-width="0.7" stroke-dasharray="1.6 2.2" opacity="0.9"/>
<circle cx="472.13" cy="393" r="3.9" fill="#000"/>
<g fill="none" stroke="#b8b8b8" stroke-width="1.1">
<path d="M106.4 253.8 H173.6 V331.6 H106.4 Z"/>
<path d="M109.8 253.8 V260.2 H129 V275.6 H116.5 V309.5 H129 V325.7 H109.8 V331.6"/>
</g>
<path d="M111 254.9 H170.4 V266 M170.4 318 V330.3 H111" fill="none" stroke="#008c8c" stroke-width="1.1"/>
<path d="M134 249.5 H149 M141.5 242 V257" stroke="#a000a0" stroke-width="1" fill="none"/>
<rect x="119.2" y="278.8" width="20" height="28" fill="#009400" stroke="#006a00" stroke-width="1"/>
<text x="121" y="294.4" font-size="4" fill="#c8e8c8" textLength="6.2" lengthAdjust="spacingAndGlyphs">ME</text>
<path d="M133 282 V304" stroke="#c0e0c0" stroke-width="2.4" stroke-dasharray="1.2 2.2" opacity="0.55"/>
<path d="M129.5 292.6 H136" stroke="#d8f0d8" stroke-width="0.9"/>
<path d="M132.6 268.5 V319.5" stroke="#00008c" stroke-width="1.1" opacity="0.85"/>
<rect x="121.2" y="256.7" width="14.8" height="9.4" rx="4.7" fill="none" stroke="#b4b400" stroke-width="1"/>
<rect x="122.7" y="258.2" width="11.8" height="6.4" rx="3.2" fill="none" stroke="#c8c800" stroke-width="1.3"/>
<path d="M125.2 259.2 H132.0" stroke="#c87890" stroke-width="0.9"/>
<rect x="149.7" y="256.7" width="18" height="9.4" rx="4.7" fill="none" stroke="#b4b400" stroke-width="1"/>
<rect x="151.2" y="258.2" width="15" height="6.4" rx="3.2" fill="none" stroke="#c8c800" stroke-width="1.3"/>
<path d="M153.7 259.2 H163.7" stroke="#c87890" stroke-width="0.9"/>
<rect x="121.2" y="318.9" width="14.8" height="9.4" rx="4.7" fill="none" stroke="#b4b400" stroke-width="1"/>
<rect x="122.7" y="320.4" width="11.8" height="6.4" rx="3.2" fill="none" stroke="#c8c800" stroke-width="1.3"/>
<path d="M125.2 321.4 H132.0" stroke="#c87890" stroke-width="0.9"/>
<rect x="149.7" y="318.9" width="18" height="9.4" rx="4.7" fill="none" stroke="#b4b400" stroke-width="1"/>
<rect x="151.2" y="320.4" width="15" height="6.4" rx="3.2" fill="none" stroke="#c8c800" stroke-width="1.3"/>
<path d="M153.7 321.4 H163.7" stroke="#c87890" stroke-width="0.9"/>
<circle cx="154.5" cy="272" r="3.7" fill="#c8c800"/>
<circle cx="154.5" cy="313.5" r="3.7" fill="#c8c800"/>
<rect x="158.8" y="266" width="12.4" height="52" fill="#840000"/>
<g stroke="#a42828" stroke-width="0.8" opacity="0.8">
<path d="M160.5 270.0 H169.5"/>
<path d="M160.5 275.4 H169.5"/>
<path d="M160.5 280.8 H169.5"/>
<path d="M160.5 286.2 H169.5"/>
<path d="M160.5 291.6 H169.5"/>
<path d="M160.5 297.0 H169.5"/>
<path d="M160.5 302.4 H169.5"/>
<path d="M160.5 307.8 H169.5"/>
<path d="M160.5 313.2 H169.5"/>
</g>
<rect x="158.3" y="265.5" width="13.4" height="53" fill="none" stroke="#a000a0" stroke-width="0.5"/>
<rect x="176.3" y="254.5" width="63" height="52" fill="none" stroke="#b0b0b0" stroke-width="1.1"/>
<rect x="194.6" y="255.8" width="27.4" height="49" fill="none" stroke="#008c8c" stroke-width="1.1"/>
<g fill="none" stroke="#840000" stroke-width="1.7" stroke-linecap="round" stroke-linejoin="round">
<path d="M171 270 L175.6 267 V263.5 H223"/>
<path d="M176.8 264 V293 Q176.8 295.5 179 295.5 H193 Q195 295.5 195 293 V264"/>
<path d="M193.7 279.8 H223"/>
<path d="M186.9 294 V307"/>
<path d="M191.5 316 V324"/>
<path d="M200 315 L212.5 326" stroke-width="2.4"/>
<path d="M228 303 V324"/>
<path d="M232 330 L262 312" stroke-width="1.6"/>
<path d="M289.2 232 V266" stroke-width="2"/>
<path d="M291 245.5 L296.5 247 L311.5 266.5 H318" stroke-width="2.7"/>
<path d="M291 257.5 L296 259.5 L307 272.5 H318" stroke-width="2.7"/>
<path d="M289.8 292.8 L306 281.5 L318 279" stroke-width="2.5"/>
<path d="M289.8 307.8 L302.3 295.3" stroke-width="2.3"/>
<path d="M287 318 L280 324 V330" stroke-width="1.6"/>
</g>
<rect x="178.50" y="266.00" width="15.25" height="28.00" rx="0.8" fill="#840000"/>
<rect x="178.00" y="265.50" width="16.25" height="29.00" rx="1" fill="none" stroke="#90108a" stroke-width="0.5" opacity="0.8"/>
<g transform="translate(186.2,278.5) rotate(90) scale(-1,1)"><text x="0" y="0" font-size="7.5" fill="#dcb4b4" text-anchor="middle" textLength="15" lengthAdjust="spacingAndGlyphs">3V3</text></g>
<g transform="translate(180,281) rotate(90) scale(-1,1)"><text x="0" y="0" font-size="7.5" fill="#dcb4b4" text-anchor="middle">2</text></g>
<rect x="223.10" y="256.60" width="16.40" height="13.15" rx="0.8" fill="#840000"/>
<rect x="222.60" y="256.10" width="17.40" height="14.15" rx="1" fill="none" stroke="#90108a" stroke-width="0.5" opacity="0.8"/>
<rect x="223.10" y="274.00" width="16.40" height="12.60" rx="0.8" fill="#840000"/>
<rect x="222.60" y="273.50" width="17.40" height="13.60" rx="1" fill="none" stroke="#90108a" stroke-width="0.5" opacity="0.8"/>
<rect x="223.10" y="290.40" width="16.40" height="12.50" rx="0.8" fill="#840000"/>
<rect x="222.60" y="289.90" width="17.40" height="13.50" rx="1" fill="none" stroke="#90108a" stroke-width="0.5" opacity="0.8"/>
<rect x="243.50" y="246.00" width="14.40" height="25.00" fill="none" stroke="#8e8e8e" stroke-width="0.9"/>
<rect x="245.40" y="247.90" width="11.20" height="8.10" rx="0.8" fill="#840000"/>
<rect x="244.90" y="247.40" width="12.20" height="9.10" rx="1" fill="none" stroke="#90108a" stroke-width="0.5" opacity="0.8"/>
<rect x="245.40" y="261.00" width="11.20" height="8.00" rx="0.8" fill="#840000"/>
<rect x="244.90" y="260.50" width="12.20" height="9.00" rx="1" fill="none" stroke="#90108a" stroke-width="0.5" opacity="0.8"/>
<path d="M245 257.5 V259.5 M257 257.5 V259.5" stroke="#008c8c" stroke-width="1.2"/>
<rect x="266.00" y="234.00" width="16.90" height="29.50" fill="none" stroke="#8e8e8e" stroke-width="0.9"/>
<rect x="267.90" y="236.00" width="13.70" height="8.00" rx="0.8" fill="#840000"/>
<rect x="267.40" y="235.50" width="14.70" height="9.00" rx="1" fill="none" stroke="#90108a" stroke-width="0.5" opacity="0.8"/>
<rect x="267.90" y="252.90" width="13.70" height="8.70" rx="0.8" fill="#840000"/>
<rect x="267.40" y="252.40" width="14.70" height="9.70" rx="1" fill="none" stroke="#90108a" stroke-width="0.5" opacity="0.8"/>
<path d="M267.3 245.5 V251.5 M282 245.5 V251.5" stroke="#008c8c" stroke-width="1.2"/>
<rect x="284.10" y="227.30" width="10.40" height="43.10" fill="none" stroke="#8e8e8e" stroke-width="0.9"/>
<path d="M285 236.5 V238.5 M293.6 236.5 V238.5 M285 258.5 V260.5 M293.6 258.5 V260.5" stroke="#008c8c" stroke-width="1.2"/>
<rect x="285.3" y="228.5" width="8" height="6.90" rx="1.6" fill="#840000"/>
<rect x="285.3" y="239" width="8" height="7.00" rx="1.6" fill="#840000"/>
<rect x="285.3" y="250.4" width="8" height="6.90" rx="1.6" fill="#840000"/>
<rect x="285.3" y="261.6" width="8" height="7.40" rx="1.6" fill="#840000"/>
<rect x="256.60" y="282.80" width="24.40" height="28.70" fill="none" stroke="#8e8e8e" stroke-width="0.9"/>
<rect x="257.90" y="284.00" width="11.20" height="10.00" rx="0.8" fill="#840000"/>
<rect x="257.40" y="283.50" width="12.20" height="11.00" rx="1" fill="none" stroke="#90108a" stroke-width="0.5" opacity="0.8"/>
<rect x="271.00" y="284.00" width="8.75" height="10.00" rx="0.8" fill="#840000"/>
<rect x="270.50" y="283.50" width="9.75" height="11.00" rx="1" fill="none" stroke="#90108a" stroke-width="0.5" opacity="0.8"/>
<rect x="257.90" y="298.40" width="11.20" height="12.50" rx="0.8" fill="#840000"/>
<rect x="257.40" y="297.90" width="12.20" height="13.50" rx="1" fill="none" stroke="#90108a" stroke-width="0.5" opacity="0.8"/>
<rect x="271.00" y="298.40" width="8.75" height="12.50" rx="0.8" fill="#840000"/>
<rect x="270.50" y="297.90" width="9.75" height="13.50" rx="1" fill="none" stroke="#90108a" stroke-width="0.5" opacity="0.8"/>
<rect x="282.30" y="279.60" width="9.30" height="42.40" fill="none" stroke="#8e8e8e" stroke-width="0.9"/>
<rect x="283.50" y="281.00" width="7.25" height="5.50" rx="0.8" fill="#840000"/>
<rect x="283.00" y="280.50" width="8.25" height="6.50" rx="1" fill="none" stroke="#90108a" stroke-width="0.5" opacity="0.8"/>
<rect x="283.50" y="291.50" width="7.25" height="6.90" rx="0.8" fill="#840000"/>
<rect x="283.00" y="291.00" width="8.25" height="7.90" rx="1" fill="none" stroke="#90108a" stroke-width="0.5" opacity="0.8"/>
<rect x="283.50" y="303.40" width="7.25" height="6.90" rx="0.8" fill="#840000"/>
<rect x="283.00" y="302.90" width="8.25" height="7.90" rx="1" fill="none" stroke="#90108a" stroke-width="0.5" opacity="0.8"/>
<rect x="283.50" y="314.60" width="7.25" height="6.90" rx="0.8" fill="#840000"/>
<rect x="283.00" y="314.10" width="8.25" height="7.90" rx="1" fill="none" stroke="#90108a" stroke-width="0.5" opacity="0.8"/>
<path d="M283 288 V290 M291 288 V290 M283 311.6 V313.4 M291 311.6 V313.4" stroke="#008c8c" stroke-width="1.2"/>
<rect x="295.75" y="277.00" width="9.65" height="20.75" fill="none" stroke="#8e8e8e" stroke-width="0.9"/>
<rect x="296.60" y="278.40" width="8.15" height="8.10" rx="0.8" fill="#840000"/>
<rect x="296.10" y="277.90" width="9.15" height="9.10" rx="1" fill="none" stroke="#90108a" stroke-width="0.5" opacity="0.8"/>
<rect x="296.60" y="289.00" width="8.15" height="8.00" rx="0.8" fill="#840000"/>
<rect x="296.10" y="288.50" width="9.15" height="9.00" rx="1" fill="none" stroke="#90108a" stroke-width="0.5" opacity="0.8"/>
<rect x="182.50" y="306.60" width="8.10" height="9.40" rx="0.8" fill="#840000"/>
<rect x="182.00" y="306.10" width="9.10" height="10.40" rx="1" fill="none" stroke="#90108a" stroke-width="0.5" opacity="0.8"/>
<rect x="193.75" y="306.60" width="8.15" height="9.40" rx="0.8" fill="#840000"/>
<rect x="193.25" y="306.10" width="9.15" height="10.40" rx="1" fill="none" stroke="#90108a" stroke-width="0.5" opacity="0.8"/>
<path d="M191 307.2 H193.4 M191 315.4 H193.4" stroke="#008c8c" stroke-width="1.1"/>
<rect x="176.25" y="322.90" width="21.85" height="11.20" fill="none" stroke="#8e8e8e" stroke-width="0.9"/>
<rect x="177.75" y="324.00" width="7.85" height="9.00" rx="0.8" fill="#840000"/>
<rect x="177.25" y="323.50" width="8.85" height="10.00" rx="1" fill="none" stroke="#90108a" stroke-width="0.5" opacity="0.8"/>
<rect x="188.75" y="324.00" width="8.50" height="9.00" rx="0.8" fill="#840000"/>
<rect x="188.25" y="323.50" width="9.50" height="10.00" rx="1" fill="none" stroke="#90108a" stroke-width="0.5" opacity="0.8"/>
<path d="M186.2 324.5 H188.2 M186.2 332.5 H188.2" stroke="#008c8c" stroke-width="1.1" fill="none"/>
<rect x="208.75" y="322.90" width="25.00" height="14.35" fill="none" stroke="#8e8e8e" stroke-width="0.9"/>
<rect x="210.00" y="324.00" width="9.40" height="12.15" rx="0.8" fill="#840000"/>
<rect x="209.50" y="323.50" width="10.40" height="13.15" rx="1" fill="none" stroke="#90108a" stroke-width="0.5" opacity="0.8"/>
<rect x="223.75" y="324.00" width="8.75" height="12.15" rx="0.8" fill="#840000"/>
<rect x="223.25" y="323.50" width="9.75" height="13.15" rx="1" fill="none" stroke="#90108a" stroke-width="0.5" opacity="0.8"/>
<path d="M220.0 324.5 H223.2 M220.0 335.6 H223.2" stroke="#008c8c" stroke-width="1.1" fill="none"/>
<rect x="239.00" y="317.00" width="24.50" height="14.00" fill="none" stroke="#8e8e8e" stroke-width="0.9"/>
<rect x="240.40" y="318.10" width="8.70" height="11.80" rx="0.8" fill="#840000"/>
<rect x="239.90" y="317.60" width="9.70" height="12.80" rx="1" fill="none" stroke="#90108a" stroke-width="0.5" opacity="0.8"/>
<rect x="253.50" y="318.10" width="9.40" height="11.80" rx="0.8" fill="#840000"/>
<rect x="253.00" y="317.60" width="10.40" height="12.80" rx="1" fill="none" stroke="#90108a" stroke-width="0.5" opacity="0.8"/>
<path d="M249.7 318.6 H252.9 M249.7 329.4 H252.9" stroke="#008c8c" stroke-width="1.1" fill="none"/>
<rect x="274.00" y="327.00" width="21.40" height="10.75" fill="none" stroke="#8e8e8e" stroke-width="0.9"/>
<rect x="275.40" y="328.10" width="7.50" height="8.55" rx="0.8" fill="#840000"/>
<rect x="274.90" y="327.60" width="8.50" height="9.55" rx="1" fill="none" stroke="#90108a" stroke-width="0.5" opacity="0.8"/>
<rect x="286.60" y="328.10" width="8.15" height="8.55" rx="0.8" fill="#840000"/>
<rect x="286.10" y="327.60" width="9.15" height="9.55" rx="1" fill="none" stroke="#90108a" stroke-width="0.5" opacity="0.8"/>
<path d="M283.5 328.6 H286.0 M283.5 336.1 H286.0" stroke="#008c8c" stroke-width="1.1" fill="none"/>
<path d="M323.5 256 V251.5 H327.5 M373 251.5 H377.5 V256 M323.5 301.5 V306 H327.5 M373 306 H377.5 V301.5" fill="none" stroke="#30a0a0" stroke-width="1.3"/>
<rect x="312.30" y="255.50" width="13.40" height="46.50" fill="none" stroke="#a8a8a8" stroke-width="0.7"/>
<rect x="373.00" y="255.50" width="15.00" height="46.50" fill="none" stroke="#a8a8a8" stroke-width="0.7"/>
<rect x="326.80" y="240.50" width="46.80" height="13.80" fill="none" stroke="#a8a8a8" stroke-width="0.7"/>
<rect x="326.80" y="301.80" width="46.80" height="14.20" fill="none" stroke="#a8a8a8" stroke-width="0.7"/>
<rect x="313.00" y="256.30" width="12.00" height="45.00" rx="0.8" fill="#840000"/>
<rect x="312.50" y="255.80" width="13.00" height="46.00" rx="1" fill="none" stroke="#90108a" stroke-width="0.5" opacity="0.8"/>
<rect x="373.80" y="256.30" width="13.60" height="45.00" rx="0.8" fill="#840000"/>
<rect x="373.30" y="255.80" width="14.60" height="46.00" rx="1" fill="none" stroke="#90108a" stroke-width="0.5" opacity="0.8"/>
<rect x="327.50" y="241.30" width="45.50" height="12.40" rx="0.8" fill="#840000"/>
<rect x="327.00" y="240.80" width="46.50" height="13.40" rx="1" fill="none" stroke="#90108a" stroke-width="0.5" opacity="0.8"/>
<rect x="327.50" y="302.50" width="45.50" height="12.80" rx="0.8" fill="#840000"/>
<rect x="327.00" y="302.00" width="46.50" height="13.80" rx="1" fill="none" stroke="#90108a" stroke-width="0.5" opacity="0.8"/>
<g stroke="#3a0000" stroke-width="1">
<path d="M332.1 243 V253.7 M332.1 302.5 V313.5"/>
<path d="M314.5 260.8 H325 M373.8 260.8 H386"/>
<path d="M336.6 243 V253.7 M336.6 302.5 V313.5"/>
<path d="M314.5 265.3 H325 M373.8 265.3 H386"/>
<path d="M341.1 243 V253.7 M341.1 302.5 V313.5"/>
<path d="M314.5 269.8 H325 M373.8 269.8 H386"/>
<path d="M345.7 243 V253.7 M345.7 302.5 V313.5"/>
<path d="M314.5 274.3 H325 M373.8 274.3 H386"/>
<path d="M350.2 243 V253.7 M350.2 302.5 V313.5"/>
<path d="M314.5 278.8 H325 M373.8 278.8 H386"/>
<path d="M354.8 243 V253.7 M354.8 302.5 V313.5"/>
<path d="M314.5 283.3 H325 M373.8 283.3 H386"/>
<path d="M359.4 243 V253.7 M359.4 302.5 V313.5"/>
<path d="M314.5 287.8 H325 M373.8 287.8 H386"/>
<path d="M363.9 243 V253.7 M363.9 302.5 V313.5"/>
<path d="M314.5 292.3 H325 M373.8 292.3 H386"/>
<path d="M368.4 243 V253.7 M368.4 302.5 V313.5"/>
<path d="M314.5 296.8 H325 M373.8 296.8 H386"/>
</g>
<rect x="329.8" y="278.7" width="20.4" height="22.8" fill="#008c00"/>
<rect x="329.2" y="277.8" width="24.2" height="24" fill="none" stroke="#707070" stroke-width="0.7"/>
<g transform="translate(348.4,290.3) rotate(-90)"><text x="0" y="0" font-size="11.5" fill="#c0e4c0" text-anchor="middle" textLength="19.5" lengthAdjust="spacingAndGlyphs">GND</text></g>
<g transform="translate(337.2,287) rotate(-90)"><text x="0" y="0" font-size="7.5" fill="#a0d8a0" text-anchor="middle">37</text></g>
<rect x="330.00" y="217.50" width="22.00" height="11.30" fill="none" stroke="#8e8e8e" stroke-width="0.9"/>
<rect x="330.90" y="218.60" width="7.90" height="9.10" rx="0.8" fill="#840000"/>
<rect x="330.40" y="218.10" width="8.90" height="10.10" rx="1" fill="none" stroke="#90108a" stroke-width="0.5" opacity="0.8"/>
<rect x="342.60" y="218.60" width="8.60" height="9.10" rx="0.8" fill="#840000"/>
<rect x="342.10" y="218.10" width="9.60" height="10.10" rx="1" fill="none" stroke="#90108a" stroke-width="0.5" opacity="0.8"/>
<path d="M339.4 219.1 H342.0 M339.4 227.2 H342.0" stroke="#008c8c" stroke-width="1.1" fill="none"/>
<rect x="390.00" y="220.00" width="23.00" height="11.00" fill="none" stroke="#8e8e8e" stroke-width="0.9"/>
<rect x="391.25" y="221.10" width="8.05" height="8.80" rx="0.8" fill="#840000"/>
<rect x="390.75" y="220.60" width="9.05" height="9.80" rx="1" fill="none" stroke="#90108a" stroke-width="0.5" opacity="0.8"/>
<rect x="403.30" y="221.10" width="8.00" height="8.80" rx="0.8" fill="#840000"/>
<rect x="402.80" y="220.60" width="9.00" height="9.80" rx="1" fill="none" stroke="#90108a" stroke-width="0.5" opacity="0.8"/>
<path d="M399.9 221.6 H402.7 M399.9 229.4 H402.7" stroke="#008c8c" stroke-width="1.1" fill="none"/>
<rect x="414.50" y="236.50" width="24.20" height="25.70" fill="none" stroke="#a0a0a0" stroke-width="1"/>
<path d="M438.5 238 H421.5 V261.4 H438.5" fill="none" stroke="#008c8c" stroke-width="1"/>
<rect x="415.00" y="245.40" width="9.20" height="8.30" rx="0.8" fill="#840000"/>
<rect x="414.50" y="244.90" width="10.20" height="9.30" rx="1" fill="none" stroke="#90108a" stroke-width="0.5" opacity="0.8"/>
<rect x="429.80" y="238.60" width="8.40" height="8.70" rx="0.8" fill="#840000"/>
<rect x="429.30" y="238.10" width="9.40" height="9.70" rx="1" fill="none" stroke="#90108a" stroke-width="0.5" opacity="0.8"/>
<rect x="429.80" y="251.50" width="8.40" height="8.00" rx="0.8" fill="#840000"/>
<rect x="429.30" y="251.00" width="9.40" height="9.00" rx="1" fill="none" stroke="#90108a" stroke-width="0.5" opacity="0.8"/>
<rect x="440.30" y="239.70" width="10.40" height="22.10" fill="none" stroke="#8e8e8e" stroke-width="0.9"/>
<rect x="441.40" y="240.90" width="8.50" height="8.50" rx="0.8" fill="#840000"/>
<rect x="440.90" y="240.40" width="9.50" height="9.50" rx="1" fill="none" stroke="#90108a" stroke-width="0.5" opacity="0.8"/>
<rect x="441.40" y="252.10" width="8.50" height="8.50" rx="0.8" fill="#840000"/>
<rect x="440.90" y="251.60" width="9.50" height="9.50" rx="1" fill="none" stroke="#90108a" stroke-width="0.5" opacity="0.8"/>
<path d="M441 250.3 V251.3 M450 250.3 V251.3" stroke="#008c8c" stroke-width="1.2"/>
<rect x="406.50" y="287.10" width="21.40" height="11.30" fill="none" stroke="#8e8e8e" stroke-width="0.9"/>
<rect x="407.60" y="288.20" width="7.80" height="9.10" rx="0.8" fill="#840000"/>
<rect x="407.10" y="287.70" width="8.80" height="10.10" rx="1" fill="none" stroke="#90108a" stroke-width="0.5" opacity="0.8"/>
<rect x="418.60" y="288.20" width="8.30" height="9.10" rx="0.8" fill="#840000"/>
<rect x="418.10" y="287.70" width="9.30" height="10.10" rx="1" fill="none" stroke="#90108a" stroke-width="0.5" opacity="0.8"/>
<path d="M416.0 288.7 H418.0 M416.0 296.8 H418.0" stroke="#008c8c" stroke-width="1.1" fill="none"/>
<rect x="343.80" y="324.30" width="22.00" height="11.20" fill="none" stroke="#8e8e8e" stroke-width="0.9"/>
<rect x="344.80" y="325.50" width="8.24" height="8.80" rx="0.8" fill="#840000"/>
<rect x="344.30" y="325.00" width="9.24" height="9.80" rx="1" fill="none" stroke="#90108a" stroke-width="0.5" opacity="0.8"/>
<rect x="356.56" y="325.50" width="8.24" height="8.80" rx="0.8" fill="#840000"/>
<rect x="356.06" y="325.00" width="9.24" height="9.80" rx="1" fill="none" stroke="#90108a" stroke-width="0.5" opacity="0.8"/>
<path d="M353.5 325.8 H356.1 M353.5 334.0 H356.1" stroke="#008c8c" stroke-width="1" fill="none"/>
<rect x="385.50" y="332.00" width="22.00" height="11.00" fill="none" stroke="#8e8e8e" stroke-width="0.9"/>
<rect x="386.50" y="333.20" width="8.24" height="8.60" rx="0.8" fill="#840000"/>
<rect x="386.00" y="332.70" width="9.24" height="9.60" rx="1" fill="none" stroke="#90108a" stroke-width="0.5" opacity="0.8"/>
<rect x="398.26" y="333.20" width="8.24" height="8.60" rx="0.8" fill="#840000"/>
<rect x="397.76" y="332.70" width="9.24" height="9.60" rx="1" fill="none" stroke="#90108a" stroke-width="0.5" opacity="0.8"/>
<path d="M395.2 333.5 H397.8 M395.2 341.5 H397.8" stroke="#008c8c" stroke-width="1" fill="none"/>
<rect x="337.30" y="341.30" width="11.70" height="22.50" fill="none" stroke="#8e8e8e" stroke-width="0.9"/>
<rect x="338.50" y="342.30" width="9.30" height="8.45" rx="0.8" fill="#840000"/>
<rect x="338.00" y="341.80" width="10.30" height="9.45" rx="1" fill="none" stroke="#90108a" stroke-width="0.5" opacity="0.8"/>
<rect x="338.50" y="354.35" width="9.30" height="8.45" rx="0.8" fill="#840000"/>
<rect x="338.00" y="353.85" width="10.30" height="9.45" rx="1" fill="none" stroke="#90108a" stroke-width="0.5" opacity="0.8"/>
<path d="M338.8 351.2 V353.9 M347.5 351.2 V353.9" stroke="#008c8c" stroke-width="1" fill="none"/>
<g fill="none" stroke="#f4f4f4" stroke-width="0.95" stroke-linecap="round">
<path d="M129 261.4 L160 261.4 M160 261.4 L164.8 266 M164.8 266 L164.8 317.5 M164.8 317.5 L160 322.6 M160 322.6 L129 323.4 M135.3 292 L154 289.4 M154 289.4 L225 280 M225 280 L315 271 M315 271 L380 263 M165.5 286 L228 282.5 M165.5 286 L260 305 M260 305 L307.5 282.5 M307.5 282.5 L327 285.4 M327 285.4 L379 271 M165.5 295 L215 299 M215 299 L260 305 M167.5 305 L240 315 M240 315 L258 323 M258 323 L260 305 M165.5 275 L175 320 M175 320 L182.5 327.5 M182.5 327.5 L195 315 M195 315 L175 320 M186 311 L212.5 330 M212.5 330 L245 322.5 M245 322.5 L260 305 M250 251 L231 262.5 M231 262.5 L237.5 285 M237.5 285 L245 322.5 M250 264 L272.5 289 M272.5 289 L260 305 M272.5 289 L281 286 M260 305 L290 317.5 M260 305 L232 297 M289.1 231 L289.1 284.5 M286 284.5 L313 283 M292 285 L322 270 M260 305 L306 317.6 M306 317.6 L345 329 M345 329 L396 337 M280 332 L343 349 M343 349 L344 330 M344 330 L354.2 308 M170 308 L262 330 M262 330 L290 333 M334.6 222 L330.9 249.3 M330.9 249.3 L322 283.8 M322 283.8 L306 311 M306 311 L290 336 M345.6 222 L344.6 248.5 M351 224 L392 226 M407 226 L380 263 M407 226 L434 243 M434 243 L445 246 M330.9 249.3 L380 263 M380 263 L400 272 M400 272 L417 291 M328.5 258.1 L396 250 M396 250 L418 249 M380 268 L432 256 M445 255 L417 291 M417 291 L426 295 M380 263 L372 304.7 M372 304.7 L359 317.6 M359 317.6 L351 324 M351 324 L343 352 M329.8 289.4 L371.9 308 M371.9 308 L386 332.5 M355 307.5 L343.8 357 M349.4 283.8 L396 290.3 M396 290.3 L412 293 M322 265 L300 330 M300 330 L289 345"/>
</g>
</svg></div>
<div class="abs" style="left:31px;top:63px;width:866px;height:1px;background:#8a8a8a"></div>
<div class="hsep" style="left:5px;top:244px;width:20px"></div>
<div class="hsep" style="left:5px;top:281px;width:20px"></div>
<div class="hsep" style="left:5px;top:375px;width:20px"></div>
<div class="hsep" style="left:5px;top:499px;width:20px"></div>
<svg class="ico" style="left:3px;top:68px" width="26" height="25" viewBox="0 0 26 25"><path d="M11.6 4.4 L9.6 1.6 M17 4.4 L19 1.6 M19.6 9.4 L23 8 M20 14.6 L22.6 18.4" stroke="#222" stroke-width="1" fill="none"/><path d="M10.4 6 L12.4 2.6 L14.4 5 L16.4 2.6 L18.2 6 Z" fill="#111"/><ellipse cx="14.4" cy="12.8" rx="5.9" ry="8.2" fill="#0a0a0a"/><circle cx="8.8" cy="14.9" r="6.8" fill="#f0f0f0" fill-opacity="0.3" stroke="#d23a3a" stroke-width="1.9"/><path d="M4.2 19.6 L13.4 10.2" stroke="#d23a3a" stroke-width="1.9"/></svg>
<div class="abs" style="left:2px;top:96px;width:26px;height:27px;background:#bbd9f3;border:1px solid #3190de"></div>
<svg class="ico" style="left:4px;top:98px" width="22" height="23" viewBox="0 0 22 23"><circle cx="3.2" cy="3.6" r="1.35" fill="#222"/><circle cx="3.2" cy="8.9" r="1.35" fill="#222"/><circle cx="3.2" cy="14.2" r="1.35" fill="#222"/><circle cx="3.2" cy="19.5" r="1.35" fill="#222"/><circle cx="8.5" cy="3.6" r="1.35" fill="#222"/><circle cx="8.5" cy="8.9" r="1.35" fill="#222"/><circle cx="8.5" cy="14.2" r="1.35" fill="#222"/><circle cx="8.5" cy="19.5" r="1.35" fill="#222"/><circle cx="13.8" cy="3.6" r="1.35" fill="#222"/><circle cx="13.8" cy="8.9" r="1.35" fill="#222"/><circle cx="13.8" cy="14.2" r="1.35" fill="#222"/><circle cx="13.8" cy="19.5" r="1.35" fill="#222"/><circle cx="19.1" cy="3.6" r="1.35" fill="#222"/><circle cx="19.1" cy="8.9" r="1.35" fill="#222"/><circle cx="19.1" cy="14.2" r="1.35" fill="#222"/><circle cx="19.1" cy="19.5" r="1.35" fill="#222"/></svg>
<svg class="ico" style="left:3px;top:126px" width="26" height="26" viewBox="0 0 26 26"><path d="M4 4 V22 H23" fill="none" stroke="#333" stroke-width="1.1"/><path d="M4 1.5 L2 5.5 H6 Z M25 22 L21 20 V24 Z" fill="#333"/><path d="M4 22 L19.5 6.5" stroke="#333" stroke-width="1.3"/><path d="M11 22 A7 7 0 0 0 9 17" fill="none" stroke="#333" stroke-width="0.9"/><circle cx="20.5" cy="5" r="1.9" fill="#e01010"/><text x="7.2" y="12" font-size="9.5" font-weight="bold" fill="#333" font-family="Liberation Sans, sans-serif">r</text><text x="15.2" y="20" font-size="9.5" font-weight="bold" font-style="italic" fill="#333" font-family="Liberation Sans, sans-serif">θ</text></svg>
<svg class="ico" style="left:3px;top:156px" width="26" height="22" viewBox="0 0 26 22"><text x="12.6" y="10.6" font-size="11.5" font-weight="bold" fill="#333" text-anchor="middle" font-family="Liberation Sans, sans-serif">in</text><path d="M3 16.6 H22" stroke="#333" stroke-width="1.1"/><path d="M1.5 16.6 L6 14.2 V19 Z M23.5 16.6 L19 14.2 V19 Z" fill="#333"/></svg>
<div class="abs" style="left:2px;top:183px;width:26px;height:27px;background:#bbd9f3;border:1px solid #3190de"></div>
<svg class="ico" style="left:3px;top:185px" width="26" height="23" viewBox="0 0 26 23"><text x="12" y="11" font-size="11.5" font-weight="bold" fill="#333" text-anchor="middle" font-family="Liberation Sans, sans-serif" textLength="19" lengthAdjust="spacingAndGlyphs">mm</text><path d="M3 16.4 H22" stroke="#333" stroke-width="1.1"/><path d="M1.5 16.4 L6 14 V18.8 Z M23.5 16.4 L19 14 V18.8 Z" fill="#333"/></svg>
<svg class="ico" style="left:3px;top:213px" width="26" height="25" viewBox="0 0 26 25"><path d="M1.5 8.6 H22" stroke="#8c8c8c" stroke-width="1"/><path d="M7.5 2 V23" stroke="#8c8c8c" stroke-width="1"/><path d="M3.6 8.6 H11.4 M7.5 4.6 V12.4" stroke="#222" stroke-width="1.5"/><path d="M11.5 11.5 V21.5 L14 19.2 L15.8 23 L17.6 22.2 L15.9 18.6 H19 Z" fill="#f4f4f4" stroke="#4a4a4a" stroke-width="0.9" stroke-linejoin="round"/></svg>
<div class="abs" style="left:2px;top:248px;width:26px;height:28px;background:#bbd9f3;border:1px solid #3190de"></div>
<svg class="ico" style="left:4px;top:250px" width="22" height="24" viewBox="0 0 22 24"><rect x="0" y="0" width="22" height="24" fill="#c4c4c4"/><path d="M4 4.6 L15.6 17.4 M4.6 18.4 L14.6 9.6 L17.4 8" stroke="#fff" stroke-width="1.5" fill="none"/><circle cx="3.6" cy="4.6" r="2.1" fill="#e0e020" stroke="#8a8a00" stroke-width="0.6"/><circle cx="16.2" cy="6.6" r="2.1" fill="#e0e020" stroke="#8a8a00" stroke-width="0.6"/><circle cx="4.8" cy="18.6" r="2.1" fill="#e0e020" stroke="#8a8a00" stroke-width="0.6"/><circle cx="16.6" cy="17.2" r="2.1" fill="#e0e020" stroke="#8a8a00" stroke-width="0.6"/></svg>
<div class="abs" style="left:2px;top:286px;width:26px;height:27px;background:#bbd9f3;border:1px solid #3190de"></div>
<svg class="ico" style="left:4px;top:288px" width="22" height="23" viewBox="0 0 22 23"><rect x="0" y="0" width="22" height="23" fill="#2e9a3c"/><circle cx="7.6" cy="7.6" r="3.6" fill="none" stroke="#fff" stroke-width="4.4"/><path d="M11 6.4 L16.6 5.2 L21 17.8" fill="none" stroke="#fff" stroke-width="5.2" stroke-linecap="round" stroke-linejoin="round"/><circle cx="7.6" cy="7.6" r="3.6" fill="none" stroke="#1e8a2c" stroke-width="1.8"/><path d="M11 6.4 L16.6 5.2 L21 17.8" fill="none" stroke="#1e8a2c" stroke-width="2.6" stroke-linecap="round" stroke-linejoin="round"/></svg>
<svg class="ico" style="left:3px;top:317px" width="24" height="23" viewBox="0 0 24 23"><rect x="0.6" y="0.6" width="22" height="21.6" fill="#f8f8f8" stroke="#2e9a3c" stroke-width="1"/><circle cx="7.6" cy="8" r="3.2" fill="none" stroke="#1e8a2c" stroke-width="2"/><path d="M10.6 7 L16.6 5.6 L21 19" fill="none" stroke="#1e8a2c" stroke-width="2.4" stroke-linejoin="round"/></svg>
<svg class="ico" style="left:3px;top:345px" width="24" height="24" viewBox="0 0 24 24"><rect x="0.6" y="0.6" width="22" height="22.6" fill="#f8f8f8" stroke="#2e9a3c" stroke-width="1"/><circle cx="7.4" cy="8" r="5.2" fill="none" stroke="#1e8a2c" stroke-width="1.3"/><circle cx="7.4" cy="8" r="2.2" fill="none" stroke="#1e8a2c" stroke-width="1.6"/><path d="M12 5 L18.4 4 L22 16 M10.6 9.8 L14.8 9 L19 21.6" fill="none" stroke="#1e8a2c" stroke-width="1.3" stroke-linejoin="round"/><path d="M11.4 7.4 L16.6 6.4 L20.6 18.8" fill="none" stroke="#1e8a2c" stroke-width="2.2" stroke-linejoin="round"/></svg>
<svg class="ico" style="left:3px;top:381px" width="26" height="26" viewBox="0 0 26 26"><circle cx="11.6" cy="13" r="6.6" fill="#fff" stroke="#2e9a3c" stroke-width="3.4"/><circle cx="11.6" cy="13" r="2.4" fill="#fff" stroke="#2e9a3c" stroke-width="1.4"/><path d="M1.6 24.6 L22.6 1.6" stroke="#8c8c8c" stroke-width="1.1"/></svg>
<svg class="ico" style="left:3px;top:411px" width="26" height="26" viewBox="0 0 26 26"><path d="M1.6 2.6 L11 11.6" stroke="#18a018" stroke-width="4.4"/><path d="M11.6 12 L22 22.4" stroke="#e01818" stroke-width="4.4"/><circle cx="11.8" cy="12" r="5.4" fill="#c8c8c8" stroke="#6a6a6a" stroke-width="1.2"/><path d="M11.8 12 L16 16 L11 16.6 Z" fill="#e0d020"/><path d="M11.8 12 L15.8 15.8" stroke="#e01818" stroke-width="2"/><path d="M1.6 22.4 L22.4 2" stroke="#8c8c8c" stroke-width="1.1"/></svg>
<svg class="ico" style="left:3px;top:440px" width="26" height="26" viewBox="0 0 26 26"><path d="M8.8 0.6 V14" stroke="#e01818" stroke-width="4.4"/><path d="M0.6 14.6 H9" stroke="#18a018" stroke-width="4.8"/><path d="M7.2 16 V24.6 M10.6 16 V24.6" stroke="#e01818" stroke-width="1"/><path d="M11 12.6 H22.6 M11 16.6 H22.6" stroke="#18a018" stroke-width="1"/><path d="M1.6 24 L22.6 1.6" stroke="#8c8c8c" stroke-width="1.1"/></svg>
<svg class="ico" style="left:3px;top:469px" width="26" height="24" viewBox="0 0 26 24"><path d="M12 3.4 H17.6 L22 11.6" fill="none" stroke="#8c8c8c" stroke-width="2.4"/><path d="M2 3 L6 11.6 H13.6 L17 21.4" fill="none" stroke="#18a018" stroke-width="2.4" stroke-linejoin="round"/><path d="M7.6 1.6 L11 8 H16.6" fill="none" stroke="#e01818" stroke-width="2.2"/><path d="M1 15.4 H6.6" stroke="#e01818" stroke-width="2.2"/><path d="M7.6 17 H11.6 L13.6 21.6" fill="none" stroke="#8c8c8c" stroke-width="2.4"/><path d="M1.6 22 L22 2.6" stroke="#8c8c8c" stroke-width="1.1"/></svg>
<div class="abs" style="left:897px;top:63px;width:15px;height:443px;background:#f3f3f3;border-top:1px solid #fcfcfc;border-right:1px solid #fafafa"></div>
<svg class="abs" style="left:901px;top:68px" width="8" height="6" viewBox="0 0 8 6"><path d="M0.8 4.8 L4 1.6 L7.2 4.8" fill="none" stroke="#505050" stroke-width="1.5"/></svg>
<svg class="abs" style="left:901px;top:497px" width="8" height="6" viewBox="0 0 8 6"><path d="M0.8 1.2 L4 4.4 L7.2 1.2" fill="none" stroke="#505050" stroke-width="1.5"/></svg>
<div class="abs" style="left:898px;top:283px;width:13px;height:15px;background:#cdcdcd"></div>
<div class="abs" style="left:31px;top:506px;width:882px;height:15px;background:#f0f0f0"></div>
<svg class="abs" style="left:35px;top:509px" width="6" height="8" viewBox="0 0 6 8"><path d="M4.8 0.8 L1.6 4 L4.8 7.2" fill="none" stroke="#505050" stroke-width="1.5"/></svg>
<svg class="abs" style="left:886px;top:509px" width="6" height="8" viewBox="0 0 6 8"><path d="M1.2 0.8 L4.4 4 L1.2 7.2" fill="none" stroke="#505050" stroke-width="1.5"/></svg>
<div class="abs" style="left:479px;top:507px;width:23px;height:13px;background:#cdcdcd"></div>
<div class="abs" style="left:913px;top:62px;width:30px;height:459px;background:#f0f0f0"></div>
<div class="hsep" style="left:917px;top:99px;width:21px"></div>
<div class="hsep" style="left:917px;top:165px;width:21px"></div>
<div class="hsep" style="left:917px;top:317px;width:21px"></div>
<div class="hsep" style="left:917px;top:470px;width:21px"></div>
<div class="abs" style="left:914px;top:67px;width:27px;height:27px;background:#bbd9f3;border:1px solid #3190de"></div>
<svg class="ico" style="left:919px;top:71px" width="18" height="20" viewBox="0 0 18 20"><path d="M3 1.6 V16 L6.8 12.6 L9.6 18.6 L12 17.4 L9.2 11.8 H14.2 Z" fill="#e9e9e9" stroke="#5a5a5a" stroke-width="1.1" stroke-linejoin="round"/></svg>
<svg class="ico" style="left:916px;top:105px" width="24" height="25" viewBox="0 0 24 25"><path d="M16.6 1.6 V23.4 M1.6 15 H23" stroke="#c4c4c4" stroke-width="2"/><path d="M8.6 1.6 V23.4" stroke="#d81818" stroke-width="2.2"/><path d="M1.6 9 H23" stroke="#4aaa4a" stroke-width="2"/><circle cx="8.6" cy="9" r="3.4" fill="#a88820"/></svg>
<svg class="ico" style="left:916px;top:134px" width="24" height="25" viewBox="0 0 24 25"><rect x="1" y="1" width="22" height="22.6" rx="2.6" fill="#c6c6c6"/><path d="M9.4 9.2 L2.6 7 M9.4 9.2 L3 21 M9.4 9.2 L21.4 4 M9.4 9.2 L19.6 19" stroke="#fff" stroke-width="1.5" fill="none"/><circle cx="9.4" cy="9.2" r="2.2" fill="#f4f4f4" stroke="#555" stroke-width="0.9"/></svg>
<svg class="ico" style="left:916px;top:172px" width="24" height="22" viewBox="0 0 24 22"><path d="M2.5 5.2 H20.5 V16.6 H2.5 V13.4 A2.4 2.4 0 0 0 2.5 8.6 Z" fill="#e8e8e8" stroke="#555" stroke-width="1"/><rect x="3.4" y="1.2" width="3.4" height="4.4" rx="0.8" fill="#20c040" stroke="#0a9a28" stroke-width="0.5"/><rect x="3.4" y="14.6" width="3.4" height="4.4" rx="0.8" fill="#20c040" stroke="#0a9a28" stroke-width="0.5"/><rect x="9.6" y="1.2" width="3.4" height="4.4" rx="0.8" fill="#20c040" stroke="#0a9a28" stroke-width="0.5"/><rect x="9.6" y="14.6" width="3.4" height="4.4" rx="0.8" fill="#20c040" stroke="#0a9a28" stroke-width="0.5"/><rect x="16" y="1.2" width="3.4" height="4.4" rx="0.8" fill="#20c040" stroke="#0a9a28" stroke-width="0.5"/><rect x="16" y="14.6" width="3.4" height="4.4" rx="0.8" fill="#20c040" stroke="#0a9a28" stroke-width="0.5"/></svg>
<svg class="ico" style="left:916px;top:200px" width="24" height="24" viewBox="0 0 24 24"><path d="M3 4 L7.2 13 L16 11 L20 21" fill="none" stroke="#109a10" stroke-width="1.9" stroke-linejoin="round" stroke-linecap="round"/></svg>
<svg class="ico" style="left:917px;top:231px" width="21" height="21" viewBox="0 0 21 21"><circle cx="10.4" cy="10.2" r="6.8" fill="#e2e000" stroke="#9a9a9a" stroke-width="2"/><circle cx="10.4" cy="10.2" r="5.4" fill="none" stroke="#b4b000" stroke-width="0.8"/></svg>
<svg class="ico" style="left:917px;top:259px" width="22" height="22" viewBox="0 0 22 22"><rect x="0" y="0.4" width="22" height="21.4" fill="#3ea048"/><circle cx="7.6" cy="8.4" r="3" fill="none" stroke="#fff" stroke-width="4"/><path d="M10.6 7.4 L15.6 6.4 L20.4 19.6" fill="none" stroke="#fff" stroke-width="4.6" stroke-linecap="round" stroke-linejoin="round"/><circle cx="7.6" cy="8.4" r="3" fill="none" stroke="#777" stroke-width="1.8"/><path d="M10.6 7.4 L15.6 6.4 L20.4 19.6" fill="none" stroke="#777" stroke-width="2.4" stroke-linecap="round" stroke-linejoin="round"/></svg>
<svg class="ico" style="left:917px;top:288px" width="22" height="23" viewBox="0 0 22 23"><rect x="0" y="0" width="22" height="22.6" fill="#2e9a3c"/><rect x="0.6" y="0.6" width="20.8" height="21.4" fill="none" stroke="#c8f0c8" stroke-width="1.2" stroke-dasharray="1.2 1.2"/><rect x="2.6" y="2.6" width="16.8" height="17.4" fill="#fafafa"/><circle cx="11" cy="11.4" r="5.9" fill="none" stroke="#d82828" stroke-width="2.3"/><path d="M7 15.4 L15 7.4" stroke="#d82828" stroke-width="2.3"/></svg>
<svg class="ico" style="left:916px;top:324px" width="24" height="24" viewBox="0 0 24 24"><path d="M4 4.4 L15.6 5.6 L19 16.6 L4 19.6" fill="none" stroke="#1414d0" stroke-width="1.6"/><circle cx="4" cy="4.4" r="2" fill="#28b028"/><circle cx="15.6" cy="5.6" r="2" fill="#28b028"/><circle cx="19" cy="16.6" r="2" fill="#28b028"/><circle cx="4" cy="19.6" r="2" fill="#28b028"/></svg>
<svg class="ico" style="left:916px;top:353px" width="24" height="24" viewBox="0 0 24 24"><circle cx="11.6" cy="12" r="9" fill="none" stroke="#1414d0" stroke-width="1.6"/><circle cx="11.6" cy="12" r="2" fill="#28b028"/><circle cx="18" cy="5.6" r="2" fill="#28b028"/></svg>
<svg class="ico" style="left:916px;top:382px" width="24" height="24" viewBox="0 0 24 24"><path d="M4 4.4 C12 5 18 10 19.6 20" fill="none" stroke="#1414d0" stroke-width="1.7"/><circle cx="4" cy="4.4" r="2" fill="#28b028"/><circle cx="4" cy="20" r="2" fill="#28b028"/><circle cx="19.6" cy="20" r="2" fill="#28b028"/></svg>
<svg class="ico" style="left:916px;top:412px" width="24" height="22" viewBox="0 0 24 22"><path d="M4 3.6 L16 5.4 L19.6 14.6 L4 19.4 Z" fill="#7a7af0" stroke="#1414d0" stroke-width="1.3" stroke-linejoin="round"/></svg>
<div class="abs" style="left:913px;top:436px;width:30px;height:30px;text-align:center;font-family:'Liberation Serif',serif;font-size:28px;line-height:30px;color:#222">T</div>
<svg class="ico" style="left:915px;top:477px" width="26" height="24" viewBox="0 0 26 24"><path d="M3 9.6 V22.4 M22 9.6 V22.4" stroke="#1414d0" stroke-width="1.7"/><path d="M5 14.4 H20" stroke="#222" stroke-width="1"/><path d="M3.8 14.4 L8 12.4 V16.4 Z M21.2 14.4 L17 12.4 V16.4 Z" fill="#222"/><text x="12.6" y="10.4" font-size="10.5" fill="#222" text-anchor="middle" font-family="Liberation Sans, sans-serif">N</text></svg>
<div class="abs" style="left:943px;top:62px;width:99px;height:460px;background:#f0f0f0"></div>
<div class="abs" style="left:943px;top:62px;width:4px;height:460px;background:linear-gradient(90deg,#f0f0f0,#cfcfcf 45%,#e2e2e2)"></div>
<div class="abs" style="left:947px;top:62px;width:95px;height:15px;background:linear-gradient(180deg,#b8b8b8,#e4e4e4)"></div>
<div class="abs" style="left:950px;top:63px;font-size:9.5px;line-height:13px;color:#1a1a1a;white-space:nowrap">层管理器</div>
<div class="abs" style="left:947px;top:77px;width:95px;height:25px;background:#eaeaea;border-top:1px solid #fafafa;border-bottom:1px solid #bcbcbc"></div>
<div class="abs" style="left:976px;top:82px;width:45px;height:19px;background:#e4e4e4;border:1px solid #c8c8c8;border-bottom:none;border-radius:3px 3px 0 0;font-size:12px;line-height:17px;padding-left:5px;white-space:nowrap">项目:</div>
<div class="abs" style="left:952px;top:81px;width:24px;height:21px;background:#fbfbfb;border:1px solid #d8d8d8;border-bottom:none;border-radius:3px 3px 0 0;font-size:12px;line-height:19px;padding-left:5px">层</div>
<svg class="abs" style="left:952px;top:106px" width="6" height="10" viewBox="0 0 6 10"><path d="M0.5 0.5 L5 5 L0.5 9.5 Z" fill="#3030ff"/></svg>
<div class="lr" style="top:105.50px"><span class="sw" style="background:#840000"></span><span class="cb"><svg width="11" height="11" viewBox="0 0 11 11"><path d="M1.8 5.6 L4.3 8.2 L9.3 2.6" fill="none" stroke="#333" stroke-width="1.1"/></svg></span><span class="ln">F.Cu</span></div>
<div class="lr" style="top:120.87px"><span class="sw" style="background:#008400"></span><span class="cb"><svg width="11" height="11" viewBox="0 0 11 11"><path d="M1.8 5.6 L4.3 8.2 L9.3 2.6" fill="none" stroke="#333" stroke-width="1.1"/></svg></span><span class="ln">B.Cu</span></div>
<div class="lr" style="top:136.24px"><span class="sw" style="background:#840084"></span><span class="cb"><svg width="11" height="11" viewBox="0 0 11 11"><path d="M1.8 5.6 L4.3 8.2 L9.3 2.6" fill="none" stroke="#333" stroke-width="1.1"/></svg></span><span class="ln">F.Adhes</span></div>
<div class="lr" style="top:151.61px"><span class="sw" style="background:#000084"></span><span class="cb"><svg width="11" height="11" viewBox="0 0 11 11"><path d="M1.8 5.6 L4.3 8.2 L9.3 2.6" fill="none" stroke="#333" stroke-width="1.1"/></svg></span><span class="ln">B.Adhes</span></div>
<div class="lr" style="top:166.98px"><span class="sw" style="background:#840000"></span><span class="cb"><svg width="11" height="11" viewBox="0 0 11 11"><path d="M1.8 5.6 L4.3 8.2 L9.3 2.6" fill="none" stroke="#333" stroke-width="1.1"/></svg></span><span class="ln">F.Paste</span></div>
<div class="lr" style="top:182.35px"><span class="sw" style="background:#00c2c2"></span><span class="cb"><svg width="11" height="11" viewBox="0 0 11 11"><path d="M1.8 5.6 L4.3 8.2 L9.3 2.6" fill="none" stroke="#333" stroke-width="1.1"/></svg></span><span class="ln">B.Paste</span></div>
<div class="lr" style="top:197.72px"><span class="sw" style="background:#008484"></span><span class="cb"><svg width="11" height="11" viewBox="0 0 11 11"><path d="M1.8 5.6 L4.3 8.2 L9.3 2.6" fill="none" stroke="#333" stroke-width="1.1"/></svg></span><span class="ln">F.SilkS</span></div>
<div class="lr" style="top:213.09px"><span class="sw" style="background:#840084"></span><span class="cb"><svg width="11" height="11" viewBox="0 0 11 11"><path d="M1.8 5.6 L4.3 8.2 L9.3 2.6" fill="none" stroke="#333" stroke-width="1.1"/></svg></span><span class="ln">B.SilkS</span></div>
<div class="lr" style="top:228.46px"><span class="sw" style="background:#840084"></span><span class="cb"><svg width="11" height="11" viewBox="0 0 11 11"><path d="M1.8 5.6 L4.3 8.2 L9.3 2.6" fill="none" stroke="#333" stroke-width="1.1"/></svg></span><span class="ln">F.Mask</span></div>
<div class="lr" style="top:243.83px"><span class="sw" style="background:#848400"></span><span class="cb"><svg width="11" height="11" viewBox="0 0 11 11"><path d="M1.8 5.6 L4.3 8.2 L9.3 2.6" fill="none" stroke="#333" stroke-width="1.1"/></svg></span><span class="ln">B.Mask</span></div>
<div class="lr" style="top:259.20px"><span class="sw" style="background:#c2c2c2"></span><span class="cb"><svg width="11" height="11" viewBox="0 0 11 11"><path d="M1.8 5.6 L4.3 8.2 L9.3 2.6" fill="none" stroke="#333" stroke-width="1.1"/></svg></span><span class="ln">Dwgs.User</span></div>
<div class="lr" style="top:274.57px"><span class="sw" style="background:#000084"></span><span class="cb"><svg width="11" height="11" viewBox="0 0 11 11"><path d="M1.8 5.6 L4.3 8.2 L9.3 2.6" fill="none" stroke="#333" stroke-width="1.1"/></svg></span><span class="ln">Cmts.User</span></div>
<div class="lr" style="top:289.94px"><span class="sw" style="background:#008400"></span><span class="cb"><svg width="11" height="11" viewBox="0 0 11 11"><path d="M1.8 5.6 L4.3 8.2 L9.3 2.6" fill="none" stroke="#333" stroke-width="1.1"/></svg></span><span class="ln">Eco1.User</span></div>
<div class="lr" style="top:305.31px"><span class="sw" style="background:#c2c200"></span><span class="cb"><svg width="11" height="11" viewBox="0 0 11 11"><path d="M1.8 5.6 L4.3 8.2 L9.3 2.6" fill="none" stroke="#333" stroke-width="1.1"/></svg></span><span class="ln">Eco2.User</span></div>
<div class="lr" style="top:320.68px"><span class="sw" style="background:#c2c200"></span><span class="cb"><svg width="11" height="11" viewBox="0 0 11 11"><path d="M1.8 5.6 L4.3 8.2 L9.3 2.6" fill="none" stroke="#333" stroke-width="1.1"/></svg></span><span class="ln">Edge.Cuts</span></div>
<div class="lr" style="top:336.05px"><span class="sw" style="background:#c200c2"></span><span class="cb"><svg width="11" height="11" viewBox="0 0 11 11"><path d="M1.8 5.6 L4.3 8.2 L9.3 2.6" fill="none" stroke="#333" stroke-width="1.1"/></svg></span><span class="ln">Margin</span></div>
<div class="lr" style="top:351.42px"><span class="sw" style="background:#c2c2c2"></span><span class="cb"><svg width="11" height="11" viewBox="0 0 11 11"><path d="M1.8 5.6 L4.3 8.2 L9.3 2.6" fill="none" stroke="#333" stroke-width="1.1"/></svg></span><span class="ln">F.CrtYd</span></div>
<div class="lr" style="top:366.79px"><span class="sw" style="background:#848484"></span><span class="cb"><svg width="11" height="11" viewBox="0 0 11 11"><path d="M1.8 5.6 L4.3 8.2 L9.3 2.6" fill="none" stroke="#333" stroke-width="1.1"/></svg></span><span class="ln">B.CrtYd</span></div>
<div class="lr" style="top:382.16px"><span class="sw" style="background:#848484"></span><span class="cb"><svg width="11" height="11" viewBox="0 0 11 11"><path d="M1.8 5.6 L4.3 8.2 L9.3 2.6" fill="none" stroke="#333" stroke-width="1.1"/></svg></span><span class="ln">F.Fab</span></div>
<div class="lr" style="top:397.53px"><span class="sw" style="background:#000084"></span><span class="cb"><svg width="11" height="11" viewBox="0 0 11 11"><path d="M1.8 5.6 L4.3 8.2 L9.3 2.6" fill="none" stroke="#333" stroke-width="1.1"/></svg></span><span class="ln">B.Fab</span></div>
<div class="msg" style="left:9px;top:523px">焊盘</div><div class="msg" style="left:9px;top:537px">161</div>
<div class="msg" style="left:59px;top:523px">过孔</div><div class="msg" style="left:59px;top:537px">0</div>
<div class="msg" style="left:110px;top:523px">布线分段数</div><div class="msg" style="left:110px;top:537px">47</div>
<div class="msg" style="left:192px;top:523px">节点</div><div class="msg" style="left:192px;top:537px">159</div>
<div class="msg" style="left:241px;top:523px">网络</div><div class="msg" style="left:241px;top:537px">89</div>
<div class="msg" style="left:284px;top:523px">未布线</div><div class="msg" style="left:284px;top:537px">55</div>
<div class="abs" style="left:588px;top:520px;width:27px;height:2px;background:linear-gradient(90deg,#5aa0e0 0,#5aa0e0 1px,#dce8f2 1px,#dce8f2 6px,#5cb85c 6px,#5cb85c 18px,#929292 18px,#929292 24px,#e4ecf2 24px,#e4ecf2 26px,#5aa0e0 26px)"></div>
<div class="abs" style="left:31px;top:506px;width:866px;height:1px;background:#fafafa"></div>
<div class="abs" style="left:31px;top:520px;width:556px;height:1px;background:#fbfbfb"></div>
<div class="abs" style="left:616px;top:520px;width:281px;height:1px;background:#f8f8f8"></div>
<div class="abs" style="left:912px;top:520px;width:31px;height:1px;background:#fafafa"></div>
<div class="abs" style="left:0;top:549px;width:1042px;height:11px;background:#f0f0f0;border-top:2px solid #e6e6e6;overflow:hidden"></div>
<div class="sep" style="left:361px;top:552px;height:8px;background:#d8d8d8"></div>
<div class="sep" style="left:424px;top:552px;height:8px;background:#d8d8d8"></div>
<div class="sep" style="left:592px;top:552px;height:8px;background:#d8d8d8"></div>
<div class="sep" style="left:851px;top:552px;height:8px;background:#d8d8d8"></div>
<div class="sep" style="left:887px;top:552px;height:8px;background:#d8d8d8"></div>
<div class="abs" style="left:366px;top:556px;font-size:11px;line-height:13px;color:#333;white-space:nowrap">Z 0.85</div>
<div class="abs" style="left:429px;top:556px;font-size:11px;line-height:13px;color:#333;white-space:nowrap">X 86.400000  Y 97.900000</div>
<div class="abs" style="left:601px;top:556px;font-size:11px;line-height:13px;color:#333;white-space:nowrap">dx 86.400000  dy 97.900000  dist 64.389</div>
</body></html>
